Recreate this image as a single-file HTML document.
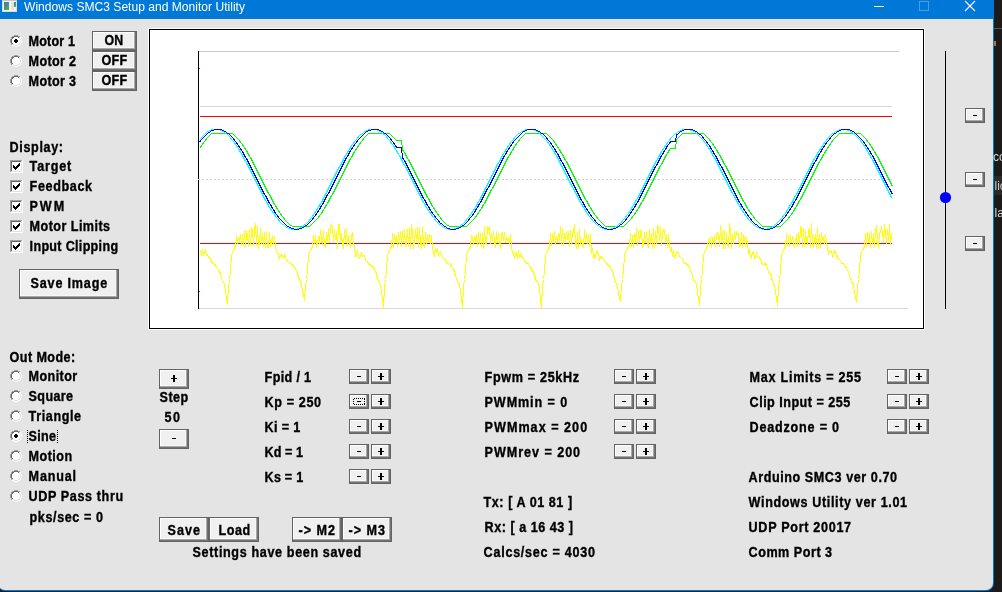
<!DOCTYPE html>
<html><head><meta charset="utf-8"><style>html,body{margin:0;padding:0;background:#1b1b1b;overflow:hidden}svg{display:block;will-change:transform}</style></head>
<body><svg width="1002" height="592" viewBox="0 0 1002 592">
<style>.b{font-family:"Liberation Sans",sans-serif;font-weight:bold;font-size:14px;fill:#000;stroke:#000;stroke-width:0.35px}.t{font-family:"Liberation Sans",sans-serif;font-size:12px;fill:#fff}</style>
<rect x="0" y="0" width="1002" height="592" fill="#1b1b1b"/>
<path d="M-3,0 H994 V583 A8,8 0 0 1 986,591 H5 A8,8 0 0 1 -3,583 Z" fill="#0078d7"/>
<path d="M-2,19 H993 V583 A7,7 0 0 1 986,590 H5 A7,7 0 0 1 -2,583 Z" fill="#e4e4e4"/>
<rect x="0" y="0" width="994" height="19" fill="#0078d7"/>
<defs><linearGradient id="ig" x1="0" y1="0" x2="0.6" y2="1"><stop offset="0" stop-color="#4a70b8"/><stop offset="1" stop-color="#4cb050"/></linearGradient></defs><g shape-rendering="crispEdges"><rect x="2" y="0" width="15" height="12" fill="#e0dcd8"/><rect x="2" y="0" width="15" height="1" fill="#c4c8cc"/><rect x="3" y="1" width="13" height="10" fill="#f8f8f8"/><rect x="4" y="2" width="5" height="8" fill="url(#ig)"/><rect x="11" y="2" width="3" height="8" fill="#e2e2e2"/><rect x="14" y="2" width="2" height="5" fill="url(#ig)"/></g>
<text x="24" y="11" class="t" textLength="221" lengthAdjust="spacingAndGlyphs">Windows SMC3 Setup and Monitor Utility</text>
<rect x="874" y="6" width="10" height="1" fill="#fff"/>
<rect x="919.5" y="1.5" width="9" height="9" fill="none" stroke="#4d9be0" stroke-width="1"/>
<path d="M965,1 L975,11 M975,1 L965,11" stroke="#fff" stroke-width="1.1"/>
<g shape-rendering="crispEdges"><circle cx="16" cy="41" r="4.6" fill="#fff"/><rect x="14" y="35" width="1" height="1" fill="#a0a0a0"/><rect x="15" y="35" width="1" height="1" fill="#a0a0a0"/><rect x="16" y="35" width="1" height="1" fill="#a0a0a0"/><rect x="17" y="35" width="1" height="1" fill="#a0a0a0"/><rect x="12" y="36" width="1" height="1" fill="#a0a0a0"/><rect x="13" y="36" width="1" height="1" fill="#a0a0a0"/><rect x="18" y="36" width="1" height="1" fill="#a0a0a0"/><rect x="19" y="36" width="1" height="1" fill="#a0a0a0"/><rect x="11" y="37" width="1" height="1" fill="#a0a0a0"/><rect x="20" y="37" width="1" height="1" fill="#ffffff"/><rect x="11" y="38" width="1" height="1" fill="#a0a0a0"/><rect x="20" y="38" width="1" height="1" fill="#ffffff"/><rect x="10" y="39" width="1" height="1" fill="#a0a0a0"/><rect x="21" y="39" width="1" height="1" fill="#ffffff"/><rect x="10" y="40" width="1" height="1" fill="#a0a0a0"/><rect x="21" y="40" width="1" height="1" fill="#ffffff"/><rect x="10" y="41" width="1" height="1" fill="#a0a0a0"/><rect x="21" y="41" width="1" height="1" fill="#ffffff"/><rect x="10" y="42" width="1" height="1" fill="#a0a0a0"/><rect x="21" y="42" width="1" height="1" fill="#ffffff"/><rect x="11" y="43" width="1" height="1" fill="#a0a0a0"/><rect x="20" y="43" width="1" height="1" fill="#ffffff"/><rect x="11" y="44" width="1" height="1" fill="#a0a0a0"/><rect x="20" y="44" width="1" height="1" fill="#ffffff"/><rect x="12" y="45" width="1" height="1" fill="#ffffff"/><rect x="13" y="45" width="1" height="1" fill="#ffffff"/><rect x="18" y="45" width="1" height="1" fill="#ffffff"/><rect x="19" y="45" width="1" height="1" fill="#ffffff"/><rect x="14" y="46" width="1" height="1" fill="#ffffff"/><rect x="15" y="46" width="1" height="1" fill="#ffffff"/><rect x="16" y="46" width="1" height="1" fill="#ffffff"/><rect x="17" y="46" width="1" height="1" fill="#ffffff"/><rect x="14" y="36" width="1" height="1" fill="#696969"/><rect x="15" y="36" width="1" height="1" fill="#696969"/><rect x="16" y="36" width="1" height="1" fill="#696969"/><rect x="17" y="36" width="1" height="1" fill="#696969"/><rect x="12" y="37" width="1" height="1" fill="#696969"/><rect x="13" y="37" width="1" height="1" fill="#696969"/><rect x="18" y="37" width="1" height="1" fill="#696969"/><rect x="19" y="37" width="1" height="1" fill="#e3e3e3"/><rect x="12" y="38" width="1" height="1" fill="#696969"/><rect x="19" y="38" width="1" height="1" fill="#e3e3e3"/><rect x="11" y="39" width="1" height="1" fill="#696969"/><rect x="20" y="39" width="1" height="1" fill="#e3e3e3"/><rect x="11" y="40" width="1" height="1" fill="#696969"/><rect x="20" y="40" width="1" height="1" fill="#e3e3e3"/><rect x="11" y="41" width="1" height="1" fill="#696969"/><rect x="20" y="41" width="1" height="1" fill="#e3e3e3"/><rect x="11" y="42" width="1" height="1" fill="#696969"/><rect x="20" y="42" width="1" height="1" fill="#e3e3e3"/><rect x="12" y="43" width="1" height="1" fill="#696969"/><rect x="19" y="43" width="1" height="1" fill="#e3e3e3"/><rect x="12" y="44" width="1" height="1" fill="#e3e3e3"/><rect x="13" y="44" width="1" height="1" fill="#e3e3e3"/><rect x="18" y="44" width="1" height="1" fill="#e3e3e3"/><rect x="19" y="44" width="1" height="1" fill="#e3e3e3"/><rect x="14" y="45" width="1" height="1" fill="#e3e3e3"/><rect x="15" y="45" width="1" height="1" fill="#e3e3e3"/><rect x="16" y="45" width="1" height="1" fill="#e3e3e3"/><rect x="17" y="45" width="1" height="1" fill="#e3e3e3"/><rect x="15" y="39" width="2" height="4" fill="#000"/><rect x="14" y="40" width="4" height="2" fill="#000"/></g>
<g shape-rendering="crispEdges"><circle cx="16" cy="61" r="4.6" fill="#fff"/><rect x="14" y="55" width="1" height="1" fill="#a0a0a0"/><rect x="15" y="55" width="1" height="1" fill="#a0a0a0"/><rect x="16" y="55" width="1" height="1" fill="#a0a0a0"/><rect x="17" y="55" width="1" height="1" fill="#a0a0a0"/><rect x="12" y="56" width="1" height="1" fill="#a0a0a0"/><rect x="13" y="56" width="1" height="1" fill="#a0a0a0"/><rect x="18" y="56" width="1" height="1" fill="#a0a0a0"/><rect x="19" y="56" width="1" height="1" fill="#a0a0a0"/><rect x="11" y="57" width="1" height="1" fill="#a0a0a0"/><rect x="20" y="57" width="1" height="1" fill="#ffffff"/><rect x="11" y="58" width="1" height="1" fill="#a0a0a0"/><rect x="20" y="58" width="1" height="1" fill="#ffffff"/><rect x="10" y="59" width="1" height="1" fill="#a0a0a0"/><rect x="21" y="59" width="1" height="1" fill="#ffffff"/><rect x="10" y="60" width="1" height="1" fill="#a0a0a0"/><rect x="21" y="60" width="1" height="1" fill="#ffffff"/><rect x="10" y="61" width="1" height="1" fill="#a0a0a0"/><rect x="21" y="61" width="1" height="1" fill="#ffffff"/><rect x="10" y="62" width="1" height="1" fill="#a0a0a0"/><rect x="21" y="62" width="1" height="1" fill="#ffffff"/><rect x="11" y="63" width="1" height="1" fill="#a0a0a0"/><rect x="20" y="63" width="1" height="1" fill="#ffffff"/><rect x="11" y="64" width="1" height="1" fill="#a0a0a0"/><rect x="20" y="64" width="1" height="1" fill="#ffffff"/><rect x="12" y="65" width="1" height="1" fill="#ffffff"/><rect x="13" y="65" width="1" height="1" fill="#ffffff"/><rect x="18" y="65" width="1" height="1" fill="#ffffff"/><rect x="19" y="65" width="1" height="1" fill="#ffffff"/><rect x="14" y="66" width="1" height="1" fill="#ffffff"/><rect x="15" y="66" width="1" height="1" fill="#ffffff"/><rect x="16" y="66" width="1" height="1" fill="#ffffff"/><rect x="17" y="66" width="1" height="1" fill="#ffffff"/><rect x="14" y="56" width="1" height="1" fill="#696969"/><rect x="15" y="56" width="1" height="1" fill="#696969"/><rect x="16" y="56" width="1" height="1" fill="#696969"/><rect x="17" y="56" width="1" height="1" fill="#696969"/><rect x="12" y="57" width="1" height="1" fill="#696969"/><rect x="13" y="57" width="1" height="1" fill="#696969"/><rect x="18" y="57" width="1" height="1" fill="#696969"/><rect x="19" y="57" width="1" height="1" fill="#e3e3e3"/><rect x="12" y="58" width="1" height="1" fill="#696969"/><rect x="19" y="58" width="1" height="1" fill="#e3e3e3"/><rect x="11" y="59" width="1" height="1" fill="#696969"/><rect x="20" y="59" width="1" height="1" fill="#e3e3e3"/><rect x="11" y="60" width="1" height="1" fill="#696969"/><rect x="20" y="60" width="1" height="1" fill="#e3e3e3"/><rect x="11" y="61" width="1" height="1" fill="#696969"/><rect x="20" y="61" width="1" height="1" fill="#e3e3e3"/><rect x="11" y="62" width="1" height="1" fill="#696969"/><rect x="20" y="62" width="1" height="1" fill="#e3e3e3"/><rect x="12" y="63" width="1" height="1" fill="#696969"/><rect x="19" y="63" width="1" height="1" fill="#e3e3e3"/><rect x="12" y="64" width="1" height="1" fill="#e3e3e3"/><rect x="13" y="64" width="1" height="1" fill="#e3e3e3"/><rect x="18" y="64" width="1" height="1" fill="#e3e3e3"/><rect x="19" y="64" width="1" height="1" fill="#e3e3e3"/><rect x="14" y="65" width="1" height="1" fill="#e3e3e3"/><rect x="15" y="65" width="1" height="1" fill="#e3e3e3"/><rect x="16" y="65" width="1" height="1" fill="#e3e3e3"/><rect x="17" y="65" width="1" height="1" fill="#e3e3e3"/></g>
<g shape-rendering="crispEdges"><circle cx="16" cy="81" r="4.6" fill="#fff"/><rect x="14" y="75" width="1" height="1" fill="#a0a0a0"/><rect x="15" y="75" width="1" height="1" fill="#a0a0a0"/><rect x="16" y="75" width="1" height="1" fill="#a0a0a0"/><rect x="17" y="75" width="1" height="1" fill="#a0a0a0"/><rect x="12" y="76" width="1" height="1" fill="#a0a0a0"/><rect x="13" y="76" width="1" height="1" fill="#a0a0a0"/><rect x="18" y="76" width="1" height="1" fill="#a0a0a0"/><rect x="19" y="76" width="1" height="1" fill="#a0a0a0"/><rect x="11" y="77" width="1" height="1" fill="#a0a0a0"/><rect x="20" y="77" width="1" height="1" fill="#ffffff"/><rect x="11" y="78" width="1" height="1" fill="#a0a0a0"/><rect x="20" y="78" width="1" height="1" fill="#ffffff"/><rect x="10" y="79" width="1" height="1" fill="#a0a0a0"/><rect x="21" y="79" width="1" height="1" fill="#ffffff"/><rect x="10" y="80" width="1" height="1" fill="#a0a0a0"/><rect x="21" y="80" width="1" height="1" fill="#ffffff"/><rect x="10" y="81" width="1" height="1" fill="#a0a0a0"/><rect x="21" y="81" width="1" height="1" fill="#ffffff"/><rect x="10" y="82" width="1" height="1" fill="#a0a0a0"/><rect x="21" y="82" width="1" height="1" fill="#ffffff"/><rect x="11" y="83" width="1" height="1" fill="#a0a0a0"/><rect x="20" y="83" width="1" height="1" fill="#ffffff"/><rect x="11" y="84" width="1" height="1" fill="#a0a0a0"/><rect x="20" y="84" width="1" height="1" fill="#ffffff"/><rect x="12" y="85" width="1" height="1" fill="#ffffff"/><rect x="13" y="85" width="1" height="1" fill="#ffffff"/><rect x="18" y="85" width="1" height="1" fill="#ffffff"/><rect x="19" y="85" width="1" height="1" fill="#ffffff"/><rect x="14" y="86" width="1" height="1" fill="#ffffff"/><rect x="15" y="86" width="1" height="1" fill="#ffffff"/><rect x="16" y="86" width="1" height="1" fill="#ffffff"/><rect x="17" y="86" width="1" height="1" fill="#ffffff"/><rect x="14" y="76" width="1" height="1" fill="#696969"/><rect x="15" y="76" width="1" height="1" fill="#696969"/><rect x="16" y="76" width="1" height="1" fill="#696969"/><rect x="17" y="76" width="1" height="1" fill="#696969"/><rect x="12" y="77" width="1" height="1" fill="#696969"/><rect x="13" y="77" width="1" height="1" fill="#696969"/><rect x="18" y="77" width="1" height="1" fill="#696969"/><rect x="19" y="77" width="1" height="1" fill="#e3e3e3"/><rect x="12" y="78" width="1" height="1" fill="#696969"/><rect x="19" y="78" width="1" height="1" fill="#e3e3e3"/><rect x="11" y="79" width="1" height="1" fill="#696969"/><rect x="20" y="79" width="1" height="1" fill="#e3e3e3"/><rect x="11" y="80" width="1" height="1" fill="#696969"/><rect x="20" y="80" width="1" height="1" fill="#e3e3e3"/><rect x="11" y="81" width="1" height="1" fill="#696969"/><rect x="20" y="81" width="1" height="1" fill="#e3e3e3"/><rect x="11" y="82" width="1" height="1" fill="#696969"/><rect x="20" y="82" width="1" height="1" fill="#e3e3e3"/><rect x="12" y="83" width="1" height="1" fill="#696969"/><rect x="19" y="83" width="1" height="1" fill="#e3e3e3"/><rect x="12" y="84" width="1" height="1" fill="#e3e3e3"/><rect x="13" y="84" width="1" height="1" fill="#e3e3e3"/><rect x="18" y="84" width="1" height="1" fill="#e3e3e3"/><rect x="19" y="84" width="1" height="1" fill="#e3e3e3"/><rect x="14" y="85" width="1" height="1" fill="#e3e3e3"/><rect x="15" y="85" width="1" height="1" fill="#e3e3e3"/><rect x="16" y="85" width="1" height="1" fill="#e3e3e3"/><rect x="17" y="85" width="1" height="1" fill="#e3e3e3"/></g>
<text transform="scale(0.9,1)" x="31.78" y="46" class="b" textLength="51.62" lengthAdjust="spacing">Motor 1</text>
<text transform="scale(0.9,1)" x="31.78" y="66" class="b" textLength="52.73" lengthAdjust="spacing">Motor 2</text>
<text transform="scale(0.9,1)" x="31.78" y="86" class="b" textLength="52.73" lengthAdjust="spacing">Motor 3</text>
<g shape-rendering="crispEdges"><rect x="92" y="31" width="45" height="20" fill="#646464"/><rect x="93" y="32" width="43" height="18" fill="#727272"/><rect x="93" y="32" width="42" height="17" fill="#a8a8a8"/><rect x="93" y="32" width="41" height="16" fill="#ffffff"/><rect x="94" y="33" width="40" height="15" fill="#f7f7f7"/><rect x="94" y="33" width="39" height="14" fill="#f0f0f0"/></g>
<text transform="scale(0.9,1)" x="116.22" y="45" class="b" textLength="20.56" lengthAdjust="spacingAndGlyphs">ON</text>
<g shape-rendering="crispEdges"><rect x="92" y="51" width="45" height="20" fill="#646464"/><rect x="93" y="52" width="43" height="18" fill="#727272"/><rect x="93" y="52" width="42" height="17" fill="#a8a8a8"/><rect x="93" y="52" width="41" height="16" fill="#ffffff"/><rect x="94" y="53" width="40" height="15" fill="#f7f7f7"/><rect x="94" y="53" width="39" height="14" fill="#f0f0f0"/></g>
<text transform="scale(0.9,1)" x="112.89" y="65" class="b" textLength="28.33" lengthAdjust="spacing">OFF</text>
<g shape-rendering="crispEdges"><rect x="92" y="71" width="45" height="20" fill="#646464"/><rect x="93" y="72" width="43" height="18" fill="#727272"/><rect x="93" y="72" width="42" height="17" fill="#a8a8a8"/><rect x="93" y="72" width="41" height="16" fill="#ffffff"/><rect x="94" y="73" width="40" height="15" fill="#f7f7f7"/><rect x="94" y="73" width="39" height="14" fill="#f0f0f0"/></g>
<text transform="scale(0.9,1)" x="112.89" y="85" class="b" textLength="28.33" lengthAdjust="spacing">OFF</text>
<text transform="scale(0.9,1)" x="10.67" y="152" class="b" textLength="59.41" lengthAdjust="spacing">Display:</text>
<g shape-rendering="crispEdges"><rect x="10" y="160" width="13" height="13" fill="#fff"/><rect x="10" y="160" width="12" height="1" fill="#a0a0a0"/><rect x="10" y="160" width="1" height="12" fill="#a0a0a0"/><rect x="11" y="161" width="10" height="1" fill="#696969"/><rect x="11" y="161" width="1" height="10" fill="#696969"/><rect x="11" y="171" width="11" height="1" fill="#e3e3e3"/><rect x="21" y="161" width="1" height="11" fill="#e3e3e3"/><rect x="19" y="163" width="1" height="1" fill="#000"/><rect x="18" y="164" width="1" height="1" fill="#000"/><rect x="19" y="164" width="1" height="1" fill="#000"/><rect x="13" y="165" width="1" height="1" fill="#000"/><rect x="17" y="165" width="1" height="1" fill="#000"/><rect x="18" y="165" width="1" height="1" fill="#000"/><rect x="19" y="165" width="1" height="1" fill="#000"/><rect x="13" y="166" width="1" height="1" fill="#000"/><rect x="14" y="166" width="1" height="1" fill="#000"/><rect x="16" y="166" width="1" height="1" fill="#000"/><rect x="17" y="166" width="1" height="1" fill="#000"/><rect x="18" y="166" width="1" height="1" fill="#000"/><rect x="13" y="167" width="1" height="1" fill="#000"/><rect x="14" y="167" width="1" height="1" fill="#000"/><rect x="15" y="167" width="1" height="1" fill="#000"/><rect x="16" y="167" width="1" height="1" fill="#000"/><rect x="17" y="167" width="1" height="1" fill="#000"/><rect x="14" y="168" width="1" height="1" fill="#000"/><rect x="15" y="168" width="1" height="1" fill="#000"/><rect x="16" y="168" width="1" height="1" fill="#000"/><rect x="15" y="169" width="1" height="1" fill="#000"/></g>
<text transform="scale(0.9,1)" x="32.89" y="171" class="b" textLength="46.16" lengthAdjust="spacing">Target</text>
<g shape-rendering="crispEdges"><rect x="10" y="180" width="13" height="13" fill="#fff"/><rect x="10" y="180" width="12" height="1" fill="#a0a0a0"/><rect x="10" y="180" width="1" height="12" fill="#a0a0a0"/><rect x="11" y="181" width="10" height="1" fill="#696969"/><rect x="11" y="181" width="1" height="10" fill="#696969"/><rect x="11" y="191" width="11" height="1" fill="#e3e3e3"/><rect x="21" y="181" width="1" height="11" fill="#e3e3e3"/><rect x="19" y="183" width="1" height="1" fill="#000"/><rect x="18" y="184" width="1" height="1" fill="#000"/><rect x="19" y="184" width="1" height="1" fill="#000"/><rect x="13" y="185" width="1" height="1" fill="#000"/><rect x="17" y="185" width="1" height="1" fill="#000"/><rect x="18" y="185" width="1" height="1" fill="#000"/><rect x="19" y="185" width="1" height="1" fill="#000"/><rect x="13" y="186" width="1" height="1" fill="#000"/><rect x="14" y="186" width="1" height="1" fill="#000"/><rect x="16" y="186" width="1" height="1" fill="#000"/><rect x="17" y="186" width="1" height="1" fill="#000"/><rect x="18" y="186" width="1" height="1" fill="#000"/><rect x="13" y="187" width="1" height="1" fill="#000"/><rect x="14" y="187" width="1" height="1" fill="#000"/><rect x="15" y="187" width="1" height="1" fill="#000"/><rect x="16" y="187" width="1" height="1" fill="#000"/><rect x="17" y="187" width="1" height="1" fill="#000"/><rect x="14" y="188" width="1" height="1" fill="#000"/><rect x="15" y="188" width="1" height="1" fill="#000"/><rect x="16" y="188" width="1" height="1" fill="#000"/><rect x="15" y="189" width="1" height="1" fill="#000"/></g>
<text transform="scale(0.9,1)" x="32.89" y="191" class="b" textLength="69.43" lengthAdjust="spacing">Feedback</text>
<g shape-rendering="crispEdges"><rect x="10" y="200" width="13" height="13" fill="#fff"/><rect x="10" y="200" width="12" height="1" fill="#a0a0a0"/><rect x="10" y="200" width="1" height="12" fill="#a0a0a0"/><rect x="11" y="201" width="10" height="1" fill="#696969"/><rect x="11" y="201" width="1" height="10" fill="#696969"/><rect x="11" y="211" width="11" height="1" fill="#e3e3e3"/><rect x="21" y="201" width="1" height="11" fill="#e3e3e3"/><rect x="19" y="203" width="1" height="1" fill="#000"/><rect x="18" y="204" width="1" height="1" fill="#000"/><rect x="19" y="204" width="1" height="1" fill="#000"/><rect x="13" y="205" width="1" height="1" fill="#000"/><rect x="17" y="205" width="1" height="1" fill="#000"/><rect x="18" y="205" width="1" height="1" fill="#000"/><rect x="19" y="205" width="1" height="1" fill="#000"/><rect x="13" y="206" width="1" height="1" fill="#000"/><rect x="14" y="206" width="1" height="1" fill="#000"/><rect x="16" y="206" width="1" height="1" fill="#000"/><rect x="17" y="206" width="1" height="1" fill="#000"/><rect x="18" y="206" width="1" height="1" fill="#000"/><rect x="13" y="207" width="1" height="1" fill="#000"/><rect x="14" y="207" width="1" height="1" fill="#000"/><rect x="15" y="207" width="1" height="1" fill="#000"/><rect x="16" y="207" width="1" height="1" fill="#000"/><rect x="17" y="207" width="1" height="1" fill="#000"/><rect x="14" y="208" width="1" height="1" fill="#000"/><rect x="15" y="208" width="1" height="1" fill="#000"/><rect x="16" y="208" width="1" height="1" fill="#000"/><rect x="15" y="209" width="1" height="1" fill="#000"/></g>
<text transform="scale(0.9,1)" x="32.89" y="211" class="b" textLength="38.35" lengthAdjust="spacing">PWM</text>
<g shape-rendering="crispEdges"><rect x="10" y="220" width="13" height="13" fill="#fff"/><rect x="10" y="220" width="12" height="1" fill="#a0a0a0"/><rect x="10" y="220" width="1" height="12" fill="#a0a0a0"/><rect x="11" y="221" width="10" height="1" fill="#696969"/><rect x="11" y="221" width="1" height="10" fill="#696969"/><rect x="11" y="231" width="11" height="1" fill="#e3e3e3"/><rect x="21" y="221" width="1" height="11" fill="#e3e3e3"/><rect x="19" y="223" width="1" height="1" fill="#000"/><rect x="18" y="224" width="1" height="1" fill="#000"/><rect x="19" y="224" width="1" height="1" fill="#000"/><rect x="13" y="225" width="1" height="1" fill="#000"/><rect x="17" y="225" width="1" height="1" fill="#000"/><rect x="18" y="225" width="1" height="1" fill="#000"/><rect x="19" y="225" width="1" height="1" fill="#000"/><rect x="13" y="226" width="1" height="1" fill="#000"/><rect x="14" y="226" width="1" height="1" fill="#000"/><rect x="16" y="226" width="1" height="1" fill="#000"/><rect x="17" y="226" width="1" height="1" fill="#000"/><rect x="18" y="226" width="1" height="1" fill="#000"/><rect x="13" y="227" width="1" height="1" fill="#000"/><rect x="14" y="227" width="1" height="1" fill="#000"/><rect x="15" y="227" width="1" height="1" fill="#000"/><rect x="16" y="227" width="1" height="1" fill="#000"/><rect x="17" y="227" width="1" height="1" fill="#000"/><rect x="14" y="228" width="1" height="1" fill="#000"/><rect x="15" y="228" width="1" height="1" fill="#000"/><rect x="16" y="228" width="1" height="1" fill="#000"/><rect x="15" y="229" width="1" height="1" fill="#000"/></g>
<text transform="scale(0.9,1)" x="32.89" y="231" class="b" textLength="89.44" lengthAdjust="spacing">Motor Limits</text>
<g shape-rendering="crispEdges"><rect x="10" y="240" width="13" height="13" fill="#fff"/><rect x="10" y="240" width="12" height="1" fill="#a0a0a0"/><rect x="10" y="240" width="1" height="12" fill="#a0a0a0"/><rect x="11" y="241" width="10" height="1" fill="#696969"/><rect x="11" y="241" width="1" height="10" fill="#696969"/><rect x="11" y="251" width="11" height="1" fill="#e3e3e3"/><rect x="21" y="241" width="1" height="11" fill="#e3e3e3"/><rect x="19" y="243" width="1" height="1" fill="#000"/><rect x="18" y="244" width="1" height="1" fill="#000"/><rect x="19" y="244" width="1" height="1" fill="#000"/><rect x="13" y="245" width="1" height="1" fill="#000"/><rect x="17" y="245" width="1" height="1" fill="#000"/><rect x="18" y="245" width="1" height="1" fill="#000"/><rect x="19" y="245" width="1" height="1" fill="#000"/><rect x="13" y="246" width="1" height="1" fill="#000"/><rect x="14" y="246" width="1" height="1" fill="#000"/><rect x="16" y="246" width="1" height="1" fill="#000"/><rect x="17" y="246" width="1" height="1" fill="#000"/><rect x="18" y="246" width="1" height="1" fill="#000"/><rect x="13" y="247" width="1" height="1" fill="#000"/><rect x="14" y="247" width="1" height="1" fill="#000"/><rect x="15" y="247" width="1" height="1" fill="#000"/><rect x="16" y="247" width="1" height="1" fill="#000"/><rect x="17" y="247" width="1" height="1" fill="#000"/><rect x="14" y="248" width="1" height="1" fill="#000"/><rect x="15" y="248" width="1" height="1" fill="#000"/><rect x="16" y="248" width="1" height="1" fill="#000"/><rect x="15" y="249" width="1" height="1" fill="#000"/></g>
<text transform="scale(0.9,1)" x="32.89" y="251" class="b" textLength="98.31" lengthAdjust="spacing">Input Clipping</text>
<g shape-rendering="crispEdges"><rect x="19" y="269" width="100" height="30" fill="#646464"/><rect x="20" y="270" width="98" height="28" fill="#727272"/><rect x="20" y="270" width="97" height="27" fill="#a8a8a8"/><rect x="20" y="270" width="96" height="26" fill="#ffffff"/><rect x="21" y="271" width="95" height="25" fill="#f7f7f7"/><rect x="21" y="271" width="94" height="24" fill="#f0f0f0"/></g>
<text transform="scale(0.9,1)" x="34.00" y="288" class="b" textLength="85.05" lengthAdjust="spacing">Save Image</text>
<text transform="scale(0.9,1)" x="10.67" y="362" class="b" textLength="72.78" lengthAdjust="spacing">Out Mode:</text>
<g shape-rendering="crispEdges"><circle cx="16" cy="376" r="4.6" fill="#fff"/><rect x="14" y="370" width="1" height="1" fill="#a0a0a0"/><rect x="15" y="370" width="1" height="1" fill="#a0a0a0"/><rect x="16" y="370" width="1" height="1" fill="#a0a0a0"/><rect x="17" y="370" width="1" height="1" fill="#a0a0a0"/><rect x="12" y="371" width="1" height="1" fill="#a0a0a0"/><rect x="13" y="371" width="1" height="1" fill="#a0a0a0"/><rect x="18" y="371" width="1" height="1" fill="#a0a0a0"/><rect x="19" y="371" width="1" height="1" fill="#a0a0a0"/><rect x="11" y="372" width="1" height="1" fill="#a0a0a0"/><rect x="20" y="372" width="1" height="1" fill="#ffffff"/><rect x="11" y="373" width="1" height="1" fill="#a0a0a0"/><rect x="20" y="373" width="1" height="1" fill="#ffffff"/><rect x="10" y="374" width="1" height="1" fill="#a0a0a0"/><rect x="21" y="374" width="1" height="1" fill="#ffffff"/><rect x="10" y="375" width="1" height="1" fill="#a0a0a0"/><rect x="21" y="375" width="1" height="1" fill="#ffffff"/><rect x="10" y="376" width="1" height="1" fill="#a0a0a0"/><rect x="21" y="376" width="1" height="1" fill="#ffffff"/><rect x="10" y="377" width="1" height="1" fill="#a0a0a0"/><rect x="21" y="377" width="1" height="1" fill="#ffffff"/><rect x="11" y="378" width="1" height="1" fill="#a0a0a0"/><rect x="20" y="378" width="1" height="1" fill="#ffffff"/><rect x="11" y="379" width="1" height="1" fill="#a0a0a0"/><rect x="20" y="379" width="1" height="1" fill="#ffffff"/><rect x="12" y="380" width="1" height="1" fill="#ffffff"/><rect x="13" y="380" width="1" height="1" fill="#ffffff"/><rect x="18" y="380" width="1" height="1" fill="#ffffff"/><rect x="19" y="380" width="1" height="1" fill="#ffffff"/><rect x="14" y="381" width="1" height="1" fill="#ffffff"/><rect x="15" y="381" width="1" height="1" fill="#ffffff"/><rect x="16" y="381" width="1" height="1" fill="#ffffff"/><rect x="17" y="381" width="1" height="1" fill="#ffffff"/><rect x="14" y="371" width="1" height="1" fill="#696969"/><rect x="15" y="371" width="1" height="1" fill="#696969"/><rect x="16" y="371" width="1" height="1" fill="#696969"/><rect x="17" y="371" width="1" height="1" fill="#696969"/><rect x="12" y="372" width="1" height="1" fill="#696969"/><rect x="13" y="372" width="1" height="1" fill="#696969"/><rect x="18" y="372" width="1" height="1" fill="#696969"/><rect x="19" y="372" width="1" height="1" fill="#e3e3e3"/><rect x="12" y="373" width="1" height="1" fill="#696969"/><rect x="19" y="373" width="1" height="1" fill="#e3e3e3"/><rect x="11" y="374" width="1" height="1" fill="#696969"/><rect x="20" y="374" width="1" height="1" fill="#e3e3e3"/><rect x="11" y="375" width="1" height="1" fill="#696969"/><rect x="20" y="375" width="1" height="1" fill="#e3e3e3"/><rect x="11" y="376" width="1" height="1" fill="#696969"/><rect x="20" y="376" width="1" height="1" fill="#e3e3e3"/><rect x="11" y="377" width="1" height="1" fill="#696969"/><rect x="20" y="377" width="1" height="1" fill="#e3e3e3"/><rect x="12" y="378" width="1" height="1" fill="#696969"/><rect x="19" y="378" width="1" height="1" fill="#e3e3e3"/><rect x="12" y="379" width="1" height="1" fill="#e3e3e3"/><rect x="13" y="379" width="1" height="1" fill="#e3e3e3"/><rect x="18" y="379" width="1" height="1" fill="#e3e3e3"/><rect x="19" y="379" width="1" height="1" fill="#e3e3e3"/><rect x="14" y="380" width="1" height="1" fill="#e3e3e3"/><rect x="15" y="380" width="1" height="1" fill="#e3e3e3"/><rect x="16" y="380" width="1" height="1" fill="#e3e3e3"/><rect x="17" y="380" width="1" height="1" fill="#e3e3e3"/></g>
<text transform="scale(0.9,1)" x="31.78" y="381" class="b" textLength="53.91" lengthAdjust="spacing">Monitor</text>
<g shape-rendering="crispEdges"><circle cx="16" cy="396" r="4.6" fill="#fff"/><rect x="14" y="390" width="1" height="1" fill="#a0a0a0"/><rect x="15" y="390" width="1" height="1" fill="#a0a0a0"/><rect x="16" y="390" width="1" height="1" fill="#a0a0a0"/><rect x="17" y="390" width="1" height="1" fill="#a0a0a0"/><rect x="12" y="391" width="1" height="1" fill="#a0a0a0"/><rect x="13" y="391" width="1" height="1" fill="#a0a0a0"/><rect x="18" y="391" width="1" height="1" fill="#a0a0a0"/><rect x="19" y="391" width="1" height="1" fill="#a0a0a0"/><rect x="11" y="392" width="1" height="1" fill="#a0a0a0"/><rect x="20" y="392" width="1" height="1" fill="#ffffff"/><rect x="11" y="393" width="1" height="1" fill="#a0a0a0"/><rect x="20" y="393" width="1" height="1" fill="#ffffff"/><rect x="10" y="394" width="1" height="1" fill="#a0a0a0"/><rect x="21" y="394" width="1" height="1" fill="#ffffff"/><rect x="10" y="395" width="1" height="1" fill="#a0a0a0"/><rect x="21" y="395" width="1" height="1" fill="#ffffff"/><rect x="10" y="396" width="1" height="1" fill="#a0a0a0"/><rect x="21" y="396" width="1" height="1" fill="#ffffff"/><rect x="10" y="397" width="1" height="1" fill="#a0a0a0"/><rect x="21" y="397" width="1" height="1" fill="#ffffff"/><rect x="11" y="398" width="1" height="1" fill="#a0a0a0"/><rect x="20" y="398" width="1" height="1" fill="#ffffff"/><rect x="11" y="399" width="1" height="1" fill="#a0a0a0"/><rect x="20" y="399" width="1" height="1" fill="#ffffff"/><rect x="12" y="400" width="1" height="1" fill="#ffffff"/><rect x="13" y="400" width="1" height="1" fill="#ffffff"/><rect x="18" y="400" width="1" height="1" fill="#ffffff"/><rect x="19" y="400" width="1" height="1" fill="#ffffff"/><rect x="14" y="401" width="1" height="1" fill="#ffffff"/><rect x="15" y="401" width="1" height="1" fill="#ffffff"/><rect x="16" y="401" width="1" height="1" fill="#ffffff"/><rect x="17" y="401" width="1" height="1" fill="#ffffff"/><rect x="14" y="391" width="1" height="1" fill="#696969"/><rect x="15" y="391" width="1" height="1" fill="#696969"/><rect x="16" y="391" width="1" height="1" fill="#696969"/><rect x="17" y="391" width="1" height="1" fill="#696969"/><rect x="12" y="392" width="1" height="1" fill="#696969"/><rect x="13" y="392" width="1" height="1" fill="#696969"/><rect x="18" y="392" width="1" height="1" fill="#696969"/><rect x="19" y="392" width="1" height="1" fill="#e3e3e3"/><rect x="12" y="393" width="1" height="1" fill="#696969"/><rect x="19" y="393" width="1" height="1" fill="#e3e3e3"/><rect x="11" y="394" width="1" height="1" fill="#696969"/><rect x="20" y="394" width="1" height="1" fill="#e3e3e3"/><rect x="11" y="395" width="1" height="1" fill="#696969"/><rect x="20" y="395" width="1" height="1" fill="#e3e3e3"/><rect x="11" y="396" width="1" height="1" fill="#696969"/><rect x="20" y="396" width="1" height="1" fill="#e3e3e3"/><rect x="11" y="397" width="1" height="1" fill="#696969"/><rect x="20" y="397" width="1" height="1" fill="#e3e3e3"/><rect x="12" y="398" width="1" height="1" fill="#696969"/><rect x="19" y="398" width="1" height="1" fill="#e3e3e3"/><rect x="12" y="399" width="1" height="1" fill="#e3e3e3"/><rect x="13" y="399" width="1" height="1" fill="#e3e3e3"/><rect x="18" y="399" width="1" height="1" fill="#e3e3e3"/><rect x="19" y="399" width="1" height="1" fill="#e3e3e3"/><rect x="14" y="400" width="1" height="1" fill="#e3e3e3"/><rect x="15" y="400" width="1" height="1" fill="#e3e3e3"/><rect x="16" y="400" width="1" height="1" fill="#e3e3e3"/><rect x="17" y="400" width="1" height="1" fill="#e3e3e3"/></g>
<text transform="scale(0.9,1)" x="31.78" y="401" class="b" textLength="49.41" lengthAdjust="spacing">Square</text>
<g shape-rendering="crispEdges"><circle cx="16" cy="416" r="4.6" fill="#fff"/><rect x="14" y="410" width="1" height="1" fill="#a0a0a0"/><rect x="15" y="410" width="1" height="1" fill="#a0a0a0"/><rect x="16" y="410" width="1" height="1" fill="#a0a0a0"/><rect x="17" y="410" width="1" height="1" fill="#a0a0a0"/><rect x="12" y="411" width="1" height="1" fill="#a0a0a0"/><rect x="13" y="411" width="1" height="1" fill="#a0a0a0"/><rect x="18" y="411" width="1" height="1" fill="#a0a0a0"/><rect x="19" y="411" width="1" height="1" fill="#a0a0a0"/><rect x="11" y="412" width="1" height="1" fill="#a0a0a0"/><rect x="20" y="412" width="1" height="1" fill="#ffffff"/><rect x="11" y="413" width="1" height="1" fill="#a0a0a0"/><rect x="20" y="413" width="1" height="1" fill="#ffffff"/><rect x="10" y="414" width="1" height="1" fill="#a0a0a0"/><rect x="21" y="414" width="1" height="1" fill="#ffffff"/><rect x="10" y="415" width="1" height="1" fill="#a0a0a0"/><rect x="21" y="415" width="1" height="1" fill="#ffffff"/><rect x="10" y="416" width="1" height="1" fill="#a0a0a0"/><rect x="21" y="416" width="1" height="1" fill="#ffffff"/><rect x="10" y="417" width="1" height="1" fill="#a0a0a0"/><rect x="21" y="417" width="1" height="1" fill="#ffffff"/><rect x="11" y="418" width="1" height="1" fill="#a0a0a0"/><rect x="20" y="418" width="1" height="1" fill="#ffffff"/><rect x="11" y="419" width="1" height="1" fill="#a0a0a0"/><rect x="20" y="419" width="1" height="1" fill="#ffffff"/><rect x="12" y="420" width="1" height="1" fill="#ffffff"/><rect x="13" y="420" width="1" height="1" fill="#ffffff"/><rect x="18" y="420" width="1" height="1" fill="#ffffff"/><rect x="19" y="420" width="1" height="1" fill="#ffffff"/><rect x="14" y="421" width="1" height="1" fill="#ffffff"/><rect x="15" y="421" width="1" height="1" fill="#ffffff"/><rect x="16" y="421" width="1" height="1" fill="#ffffff"/><rect x="17" y="421" width="1" height="1" fill="#ffffff"/><rect x="14" y="411" width="1" height="1" fill="#696969"/><rect x="15" y="411" width="1" height="1" fill="#696969"/><rect x="16" y="411" width="1" height="1" fill="#696969"/><rect x="17" y="411" width="1" height="1" fill="#696969"/><rect x="12" y="412" width="1" height="1" fill="#696969"/><rect x="13" y="412" width="1" height="1" fill="#696969"/><rect x="18" y="412" width="1" height="1" fill="#696969"/><rect x="19" y="412" width="1" height="1" fill="#e3e3e3"/><rect x="12" y="413" width="1" height="1" fill="#696969"/><rect x="19" y="413" width="1" height="1" fill="#e3e3e3"/><rect x="11" y="414" width="1" height="1" fill="#696969"/><rect x="20" y="414" width="1" height="1" fill="#e3e3e3"/><rect x="11" y="415" width="1" height="1" fill="#696969"/><rect x="20" y="415" width="1" height="1" fill="#e3e3e3"/><rect x="11" y="416" width="1" height="1" fill="#696969"/><rect x="20" y="416" width="1" height="1" fill="#e3e3e3"/><rect x="11" y="417" width="1" height="1" fill="#696969"/><rect x="20" y="417" width="1" height="1" fill="#e3e3e3"/><rect x="12" y="418" width="1" height="1" fill="#696969"/><rect x="19" y="418" width="1" height="1" fill="#e3e3e3"/><rect x="12" y="419" width="1" height="1" fill="#e3e3e3"/><rect x="13" y="419" width="1" height="1" fill="#e3e3e3"/><rect x="18" y="419" width="1" height="1" fill="#e3e3e3"/><rect x="19" y="419" width="1" height="1" fill="#e3e3e3"/><rect x="14" y="420" width="1" height="1" fill="#e3e3e3"/><rect x="15" y="420" width="1" height="1" fill="#e3e3e3"/><rect x="16" y="420" width="1" height="1" fill="#e3e3e3"/><rect x="17" y="420" width="1" height="1" fill="#e3e3e3"/></g>
<text transform="scale(0.9,1)" x="31.78" y="421" class="b" textLength="58.31" lengthAdjust="spacing">Triangle</text>
<g shape-rendering="crispEdges"><circle cx="16" cy="436" r="4.6" fill="#fff"/><rect x="14" y="430" width="1" height="1" fill="#a0a0a0"/><rect x="15" y="430" width="1" height="1" fill="#a0a0a0"/><rect x="16" y="430" width="1" height="1" fill="#a0a0a0"/><rect x="17" y="430" width="1" height="1" fill="#a0a0a0"/><rect x="12" y="431" width="1" height="1" fill="#a0a0a0"/><rect x="13" y="431" width="1" height="1" fill="#a0a0a0"/><rect x="18" y="431" width="1" height="1" fill="#a0a0a0"/><rect x="19" y="431" width="1" height="1" fill="#a0a0a0"/><rect x="11" y="432" width="1" height="1" fill="#a0a0a0"/><rect x="20" y="432" width="1" height="1" fill="#ffffff"/><rect x="11" y="433" width="1" height="1" fill="#a0a0a0"/><rect x="20" y="433" width="1" height="1" fill="#ffffff"/><rect x="10" y="434" width="1" height="1" fill="#a0a0a0"/><rect x="21" y="434" width="1" height="1" fill="#ffffff"/><rect x="10" y="435" width="1" height="1" fill="#a0a0a0"/><rect x="21" y="435" width="1" height="1" fill="#ffffff"/><rect x="10" y="436" width="1" height="1" fill="#a0a0a0"/><rect x="21" y="436" width="1" height="1" fill="#ffffff"/><rect x="10" y="437" width="1" height="1" fill="#a0a0a0"/><rect x="21" y="437" width="1" height="1" fill="#ffffff"/><rect x="11" y="438" width="1" height="1" fill="#a0a0a0"/><rect x="20" y="438" width="1" height="1" fill="#ffffff"/><rect x="11" y="439" width="1" height="1" fill="#a0a0a0"/><rect x="20" y="439" width="1" height="1" fill="#ffffff"/><rect x="12" y="440" width="1" height="1" fill="#ffffff"/><rect x="13" y="440" width="1" height="1" fill="#ffffff"/><rect x="18" y="440" width="1" height="1" fill="#ffffff"/><rect x="19" y="440" width="1" height="1" fill="#ffffff"/><rect x="14" y="441" width="1" height="1" fill="#ffffff"/><rect x="15" y="441" width="1" height="1" fill="#ffffff"/><rect x="16" y="441" width="1" height="1" fill="#ffffff"/><rect x="17" y="441" width="1" height="1" fill="#ffffff"/><rect x="14" y="431" width="1" height="1" fill="#696969"/><rect x="15" y="431" width="1" height="1" fill="#696969"/><rect x="16" y="431" width="1" height="1" fill="#696969"/><rect x="17" y="431" width="1" height="1" fill="#696969"/><rect x="12" y="432" width="1" height="1" fill="#696969"/><rect x="13" y="432" width="1" height="1" fill="#696969"/><rect x="18" y="432" width="1" height="1" fill="#696969"/><rect x="19" y="432" width="1" height="1" fill="#e3e3e3"/><rect x="12" y="433" width="1" height="1" fill="#696969"/><rect x="19" y="433" width="1" height="1" fill="#e3e3e3"/><rect x="11" y="434" width="1" height="1" fill="#696969"/><rect x="20" y="434" width="1" height="1" fill="#e3e3e3"/><rect x="11" y="435" width="1" height="1" fill="#696969"/><rect x="20" y="435" width="1" height="1" fill="#e3e3e3"/><rect x="11" y="436" width="1" height="1" fill="#696969"/><rect x="20" y="436" width="1" height="1" fill="#e3e3e3"/><rect x="11" y="437" width="1" height="1" fill="#696969"/><rect x="20" y="437" width="1" height="1" fill="#e3e3e3"/><rect x="12" y="438" width="1" height="1" fill="#696969"/><rect x="19" y="438" width="1" height="1" fill="#e3e3e3"/><rect x="12" y="439" width="1" height="1" fill="#e3e3e3"/><rect x="13" y="439" width="1" height="1" fill="#e3e3e3"/><rect x="18" y="439" width="1" height="1" fill="#e3e3e3"/><rect x="19" y="439" width="1" height="1" fill="#e3e3e3"/><rect x="14" y="440" width="1" height="1" fill="#e3e3e3"/><rect x="15" y="440" width="1" height="1" fill="#e3e3e3"/><rect x="16" y="440" width="1" height="1" fill="#e3e3e3"/><rect x="17" y="440" width="1" height="1" fill="#e3e3e3"/><rect x="15" y="434" width="2" height="4" fill="#000"/><rect x="14" y="435" width="4" height="2" fill="#000"/></g>
<text transform="scale(0.9,1)" x="31.78" y="441" class="b" textLength="30.52" lengthAdjust="spacing">Sine</text>
<g shape-rendering="crispEdges"><circle cx="16" cy="456" r="4.6" fill="#fff"/><rect x="14" y="450" width="1" height="1" fill="#a0a0a0"/><rect x="15" y="450" width="1" height="1" fill="#a0a0a0"/><rect x="16" y="450" width="1" height="1" fill="#a0a0a0"/><rect x="17" y="450" width="1" height="1" fill="#a0a0a0"/><rect x="12" y="451" width="1" height="1" fill="#a0a0a0"/><rect x="13" y="451" width="1" height="1" fill="#a0a0a0"/><rect x="18" y="451" width="1" height="1" fill="#a0a0a0"/><rect x="19" y="451" width="1" height="1" fill="#a0a0a0"/><rect x="11" y="452" width="1" height="1" fill="#a0a0a0"/><rect x="20" y="452" width="1" height="1" fill="#ffffff"/><rect x="11" y="453" width="1" height="1" fill="#a0a0a0"/><rect x="20" y="453" width="1" height="1" fill="#ffffff"/><rect x="10" y="454" width="1" height="1" fill="#a0a0a0"/><rect x="21" y="454" width="1" height="1" fill="#ffffff"/><rect x="10" y="455" width="1" height="1" fill="#a0a0a0"/><rect x="21" y="455" width="1" height="1" fill="#ffffff"/><rect x="10" y="456" width="1" height="1" fill="#a0a0a0"/><rect x="21" y="456" width="1" height="1" fill="#ffffff"/><rect x="10" y="457" width="1" height="1" fill="#a0a0a0"/><rect x="21" y="457" width="1" height="1" fill="#ffffff"/><rect x="11" y="458" width="1" height="1" fill="#a0a0a0"/><rect x="20" y="458" width="1" height="1" fill="#ffffff"/><rect x="11" y="459" width="1" height="1" fill="#a0a0a0"/><rect x="20" y="459" width="1" height="1" fill="#ffffff"/><rect x="12" y="460" width="1" height="1" fill="#ffffff"/><rect x="13" y="460" width="1" height="1" fill="#ffffff"/><rect x="18" y="460" width="1" height="1" fill="#ffffff"/><rect x="19" y="460" width="1" height="1" fill="#ffffff"/><rect x="14" y="461" width="1" height="1" fill="#ffffff"/><rect x="15" y="461" width="1" height="1" fill="#ffffff"/><rect x="16" y="461" width="1" height="1" fill="#ffffff"/><rect x="17" y="461" width="1" height="1" fill="#ffffff"/><rect x="14" y="451" width="1" height="1" fill="#696969"/><rect x="15" y="451" width="1" height="1" fill="#696969"/><rect x="16" y="451" width="1" height="1" fill="#696969"/><rect x="17" y="451" width="1" height="1" fill="#696969"/><rect x="12" y="452" width="1" height="1" fill="#696969"/><rect x="13" y="452" width="1" height="1" fill="#696969"/><rect x="18" y="452" width="1" height="1" fill="#696969"/><rect x="19" y="452" width="1" height="1" fill="#e3e3e3"/><rect x="12" y="453" width="1" height="1" fill="#696969"/><rect x="19" y="453" width="1" height="1" fill="#e3e3e3"/><rect x="11" y="454" width="1" height="1" fill="#696969"/><rect x="20" y="454" width="1" height="1" fill="#e3e3e3"/><rect x="11" y="455" width="1" height="1" fill="#696969"/><rect x="20" y="455" width="1" height="1" fill="#e3e3e3"/><rect x="11" y="456" width="1" height="1" fill="#696969"/><rect x="20" y="456" width="1" height="1" fill="#e3e3e3"/><rect x="11" y="457" width="1" height="1" fill="#696969"/><rect x="20" y="457" width="1" height="1" fill="#e3e3e3"/><rect x="12" y="458" width="1" height="1" fill="#696969"/><rect x="19" y="458" width="1" height="1" fill="#e3e3e3"/><rect x="12" y="459" width="1" height="1" fill="#e3e3e3"/><rect x="13" y="459" width="1" height="1" fill="#e3e3e3"/><rect x="18" y="459" width="1" height="1" fill="#e3e3e3"/><rect x="19" y="459" width="1" height="1" fill="#e3e3e3"/><rect x="14" y="460" width="1" height="1" fill="#e3e3e3"/><rect x="15" y="460" width="1" height="1" fill="#e3e3e3"/><rect x="16" y="460" width="1" height="1" fill="#e3e3e3"/><rect x="17" y="460" width="1" height="1" fill="#e3e3e3"/></g>
<text transform="scale(0.9,1)" x="31.78" y="461" class="b" textLength="48.30" lengthAdjust="spacing">Motion</text>
<g shape-rendering="crispEdges"><circle cx="16" cy="476" r="4.6" fill="#fff"/><rect x="14" y="470" width="1" height="1" fill="#a0a0a0"/><rect x="15" y="470" width="1" height="1" fill="#a0a0a0"/><rect x="16" y="470" width="1" height="1" fill="#a0a0a0"/><rect x="17" y="470" width="1" height="1" fill="#a0a0a0"/><rect x="12" y="471" width="1" height="1" fill="#a0a0a0"/><rect x="13" y="471" width="1" height="1" fill="#a0a0a0"/><rect x="18" y="471" width="1" height="1" fill="#a0a0a0"/><rect x="19" y="471" width="1" height="1" fill="#a0a0a0"/><rect x="11" y="472" width="1" height="1" fill="#a0a0a0"/><rect x="20" y="472" width="1" height="1" fill="#ffffff"/><rect x="11" y="473" width="1" height="1" fill="#a0a0a0"/><rect x="20" y="473" width="1" height="1" fill="#ffffff"/><rect x="10" y="474" width="1" height="1" fill="#a0a0a0"/><rect x="21" y="474" width="1" height="1" fill="#ffffff"/><rect x="10" y="475" width="1" height="1" fill="#a0a0a0"/><rect x="21" y="475" width="1" height="1" fill="#ffffff"/><rect x="10" y="476" width="1" height="1" fill="#a0a0a0"/><rect x="21" y="476" width="1" height="1" fill="#ffffff"/><rect x="10" y="477" width="1" height="1" fill="#a0a0a0"/><rect x="21" y="477" width="1" height="1" fill="#ffffff"/><rect x="11" y="478" width="1" height="1" fill="#a0a0a0"/><rect x="20" y="478" width="1" height="1" fill="#ffffff"/><rect x="11" y="479" width="1" height="1" fill="#a0a0a0"/><rect x="20" y="479" width="1" height="1" fill="#ffffff"/><rect x="12" y="480" width="1" height="1" fill="#ffffff"/><rect x="13" y="480" width="1" height="1" fill="#ffffff"/><rect x="18" y="480" width="1" height="1" fill="#ffffff"/><rect x="19" y="480" width="1" height="1" fill="#ffffff"/><rect x="14" y="481" width="1" height="1" fill="#ffffff"/><rect x="15" y="481" width="1" height="1" fill="#ffffff"/><rect x="16" y="481" width="1" height="1" fill="#ffffff"/><rect x="17" y="481" width="1" height="1" fill="#ffffff"/><rect x="14" y="471" width="1" height="1" fill="#696969"/><rect x="15" y="471" width="1" height="1" fill="#696969"/><rect x="16" y="471" width="1" height="1" fill="#696969"/><rect x="17" y="471" width="1" height="1" fill="#696969"/><rect x="12" y="472" width="1" height="1" fill="#696969"/><rect x="13" y="472" width="1" height="1" fill="#696969"/><rect x="18" y="472" width="1" height="1" fill="#696969"/><rect x="19" y="472" width="1" height="1" fill="#e3e3e3"/><rect x="12" y="473" width="1" height="1" fill="#696969"/><rect x="19" y="473" width="1" height="1" fill="#e3e3e3"/><rect x="11" y="474" width="1" height="1" fill="#696969"/><rect x="20" y="474" width="1" height="1" fill="#e3e3e3"/><rect x="11" y="475" width="1" height="1" fill="#696969"/><rect x="20" y="475" width="1" height="1" fill="#e3e3e3"/><rect x="11" y="476" width="1" height="1" fill="#696969"/><rect x="20" y="476" width="1" height="1" fill="#e3e3e3"/><rect x="11" y="477" width="1" height="1" fill="#696969"/><rect x="20" y="477" width="1" height="1" fill="#e3e3e3"/><rect x="12" y="478" width="1" height="1" fill="#696969"/><rect x="19" y="478" width="1" height="1" fill="#e3e3e3"/><rect x="12" y="479" width="1" height="1" fill="#e3e3e3"/><rect x="13" y="479" width="1" height="1" fill="#e3e3e3"/><rect x="18" y="479" width="1" height="1" fill="#e3e3e3"/><rect x="19" y="479" width="1" height="1" fill="#e3e3e3"/><rect x="14" y="480" width="1" height="1" fill="#e3e3e3"/><rect x="15" y="480" width="1" height="1" fill="#e3e3e3"/><rect x="16" y="480" width="1" height="1" fill="#e3e3e3"/><rect x="17" y="480" width="1" height="1" fill="#e3e3e3"/></g>
<text transform="scale(0.9,1)" x="31.78" y="481" class="b" textLength="52.80" lengthAdjust="spacing">Manual</text>
<g shape-rendering="crispEdges"><circle cx="16" cy="496" r="4.6" fill="#fff"/><rect x="14" y="490" width="1" height="1" fill="#a0a0a0"/><rect x="15" y="490" width="1" height="1" fill="#a0a0a0"/><rect x="16" y="490" width="1" height="1" fill="#a0a0a0"/><rect x="17" y="490" width="1" height="1" fill="#a0a0a0"/><rect x="12" y="491" width="1" height="1" fill="#a0a0a0"/><rect x="13" y="491" width="1" height="1" fill="#a0a0a0"/><rect x="18" y="491" width="1" height="1" fill="#a0a0a0"/><rect x="19" y="491" width="1" height="1" fill="#a0a0a0"/><rect x="11" y="492" width="1" height="1" fill="#a0a0a0"/><rect x="20" y="492" width="1" height="1" fill="#ffffff"/><rect x="11" y="493" width="1" height="1" fill="#a0a0a0"/><rect x="20" y="493" width="1" height="1" fill="#ffffff"/><rect x="10" y="494" width="1" height="1" fill="#a0a0a0"/><rect x="21" y="494" width="1" height="1" fill="#ffffff"/><rect x="10" y="495" width="1" height="1" fill="#a0a0a0"/><rect x="21" y="495" width="1" height="1" fill="#ffffff"/><rect x="10" y="496" width="1" height="1" fill="#a0a0a0"/><rect x="21" y="496" width="1" height="1" fill="#ffffff"/><rect x="10" y="497" width="1" height="1" fill="#a0a0a0"/><rect x="21" y="497" width="1" height="1" fill="#ffffff"/><rect x="11" y="498" width="1" height="1" fill="#a0a0a0"/><rect x="20" y="498" width="1" height="1" fill="#ffffff"/><rect x="11" y="499" width="1" height="1" fill="#a0a0a0"/><rect x="20" y="499" width="1" height="1" fill="#ffffff"/><rect x="12" y="500" width="1" height="1" fill="#ffffff"/><rect x="13" y="500" width="1" height="1" fill="#ffffff"/><rect x="18" y="500" width="1" height="1" fill="#ffffff"/><rect x="19" y="500" width="1" height="1" fill="#ffffff"/><rect x="14" y="501" width="1" height="1" fill="#ffffff"/><rect x="15" y="501" width="1" height="1" fill="#ffffff"/><rect x="16" y="501" width="1" height="1" fill="#ffffff"/><rect x="17" y="501" width="1" height="1" fill="#ffffff"/><rect x="14" y="491" width="1" height="1" fill="#696969"/><rect x="15" y="491" width="1" height="1" fill="#696969"/><rect x="16" y="491" width="1" height="1" fill="#696969"/><rect x="17" y="491" width="1" height="1" fill="#696969"/><rect x="12" y="492" width="1" height="1" fill="#696969"/><rect x="13" y="492" width="1" height="1" fill="#696969"/><rect x="18" y="492" width="1" height="1" fill="#696969"/><rect x="19" y="492" width="1" height="1" fill="#e3e3e3"/><rect x="12" y="493" width="1" height="1" fill="#696969"/><rect x="19" y="493" width="1" height="1" fill="#e3e3e3"/><rect x="11" y="494" width="1" height="1" fill="#696969"/><rect x="20" y="494" width="1" height="1" fill="#e3e3e3"/><rect x="11" y="495" width="1" height="1" fill="#696969"/><rect x="20" y="495" width="1" height="1" fill="#e3e3e3"/><rect x="11" y="496" width="1" height="1" fill="#696969"/><rect x="20" y="496" width="1" height="1" fill="#e3e3e3"/><rect x="11" y="497" width="1" height="1" fill="#696969"/><rect x="20" y="497" width="1" height="1" fill="#e3e3e3"/><rect x="12" y="498" width="1" height="1" fill="#696969"/><rect x="19" y="498" width="1" height="1" fill="#e3e3e3"/><rect x="12" y="499" width="1" height="1" fill="#e3e3e3"/><rect x="13" y="499" width="1" height="1" fill="#e3e3e3"/><rect x="18" y="499" width="1" height="1" fill="#e3e3e3"/><rect x="19" y="499" width="1" height="1" fill="#e3e3e3"/><rect x="14" y="500" width="1" height="1" fill="#e3e3e3"/><rect x="15" y="500" width="1" height="1" fill="#e3e3e3"/><rect x="16" y="500" width="1" height="1" fill="#e3e3e3"/><rect x="17" y="500" width="1" height="1" fill="#e3e3e3"/></g>
<text transform="scale(0.9,1)" x="31.78" y="501" class="b" textLength="104.99" lengthAdjust="spacing">UDP Pass thru</text>
<text transform="scale(0.9,1)" x="32.89" y="522" class="b" textLength="81.68" lengthAdjust="spacing">pks/sec = 0</text>
<g shape-rendering="crispEdges"><rect x="27" y="430" width="1" height="1" fill="#000"/><rect x="57" y="430" width="1" height="1" fill="#000"/><rect x="27" y="432" width="1" height="1" fill="#000"/><rect x="57" y="432" width="1" height="1" fill="#000"/><rect x="27" y="434" width="1" height="1" fill="#000"/><rect x="57" y="434" width="1" height="1" fill="#000"/><rect x="27" y="436" width="1" height="1" fill="#000"/><rect x="57" y="436" width="1" height="1" fill="#000"/><rect x="27" y="438" width="1" height="1" fill="#000"/><rect x="57" y="438" width="1" height="1" fill="#000"/><rect x="27" y="440" width="1" height="1" fill="#000"/><rect x="57" y="440" width="1" height="1" fill="#000"/><rect x="27" y="442" width="1" height="1" fill="#000"/><rect x="57" y="442" width="1" height="1" fill="#000"/></g>
<g shape-rendering="crispEdges"><rect x="159" y="369" width="30" height="20" fill="#646464"/><rect x="160" y="370" width="28" height="18" fill="#727272"/><rect x="160" y="370" width="27" height="17" fill="#a8a8a8"/><rect x="160" y="370" width="26" height="16" fill="#ffffff"/><rect x="161" y="371" width="25" height="15" fill="#f7f7f7"/><rect x="161" y="371" width="24" height="14" fill="#f0f0f0"/><rect x="171" y="378" width="6" height="1" fill="#000"/><rect x="173" y="375" width="2" height="7" fill="#000"/></g>
<text transform="scale(0.9,1)" x="177.33" y="402" class="b" textLength="31.70" lengthAdjust="spacing">Step</text>
<text transform="scale(0.9,1)" x="182.89" y="422" class="b" textLength="17.19" lengthAdjust="spacing">50</text>
<g shape-rendering="crispEdges"><rect x="159" y="429" width="30" height="20" fill="#646464"/><rect x="160" y="430" width="28" height="18" fill="#727272"/><rect x="160" y="430" width="27" height="17" fill="#a8a8a8"/><rect x="160" y="430" width="26" height="16" fill="#ffffff"/><rect x="161" y="431" width="25" height="15" fill="#f7f7f7"/><rect x="161" y="431" width="24" height="14" fill="#f0f0f0"/><rect x="172" y="438" width="4" height="1" fill="#000"/></g>
<text transform="scale(0.9,1)" x="294.00" y="382" class="b" textLength="51.66" lengthAdjust="spacing">Fpid / 1</text>
<g shape-rendering="crispEdges"><rect x="349" y="369" width="20" height="15" fill="#646464"/><rect x="350" y="370" width="18" height="13" fill="#727272"/><rect x="350" y="370" width="17" height="12" fill="#a8a8a8"/><rect x="350" y="370" width="16" height="11" fill="#ffffff"/><rect x="351" y="371" width="15" height="10" fill="#f7f7f7"/><rect x="351" y="371" width="14" height="9" fill="#f0f0f0"/><rect x="357" y="376" width="4" height="1" fill="#000"/></g>
<g shape-rendering="crispEdges"><rect x="371" y="369" width="20" height="15" fill="#646464"/><rect x="372" y="370" width="18" height="13" fill="#727272"/><rect x="372" y="370" width="17" height="12" fill="#a8a8a8"/><rect x="372" y="370" width="16" height="11" fill="#ffffff"/><rect x="373" y="371" width="15" height="10" fill="#f7f7f7"/><rect x="373" y="371" width="14" height="9" fill="#f0f0f0"/><rect x="378" y="376" width="6" height="1" fill="#000"/><rect x="380" y="373" width="2" height="7" fill="#000"/></g>
<text transform="scale(0.9,1)" x="294.00" y="407" class="b" textLength="62.75" lengthAdjust="spacing">Kp = 250</text>
<g shape-rendering="crispEdges"><rect x="349" y="394" width="20" height="15" fill="#646464"/><rect x="350" y="395" width="18" height="13" fill="#727272"/><rect x="350" y="395" width="17" height="12" fill="#a8a8a8"/><rect x="350" y="395" width="16" height="11" fill="#ffffff"/><rect x="351" y="396" width="15" height="10" fill="#f7f7f7"/><rect x="351" y="396" width="14" height="9" fill="#f0f0f0"/><rect x="357" y="401" width="4" height="1" fill="#000"/></g>
<g shape-rendering="crispEdges"><rect x="371" y="394" width="20" height="15" fill="#646464"/><rect x="372" y="395" width="18" height="13" fill="#727272"/><rect x="372" y="395" width="17" height="12" fill="#a8a8a8"/><rect x="372" y="395" width="16" height="11" fill="#ffffff"/><rect x="373" y="396" width="15" height="10" fill="#f7f7f7"/><rect x="373" y="396" width="14" height="9" fill="#f0f0f0"/><rect x="378" y="401" width="6" height="1" fill="#000"/><rect x="380" y="398" width="2" height="7" fill="#000"/></g>
<text transform="scale(0.9,1)" x="294.00" y="432" class="b" textLength="39.49" lengthAdjust="spacing">Ki = 1</text>
<g shape-rendering="crispEdges"><rect x="349" y="419" width="20" height="15" fill="#646464"/><rect x="350" y="420" width="18" height="13" fill="#727272"/><rect x="350" y="420" width="17" height="12" fill="#a8a8a8"/><rect x="350" y="420" width="16" height="11" fill="#ffffff"/><rect x="351" y="421" width="15" height="10" fill="#f7f7f7"/><rect x="351" y="421" width="14" height="9" fill="#f0f0f0"/><rect x="357" y="426" width="4" height="1" fill="#000"/></g>
<g shape-rendering="crispEdges"><rect x="371" y="419" width="20" height="15" fill="#646464"/><rect x="372" y="420" width="18" height="13" fill="#727272"/><rect x="372" y="420" width="17" height="12" fill="#a8a8a8"/><rect x="372" y="420" width="16" height="11" fill="#ffffff"/><rect x="373" y="421" width="15" height="10" fill="#f7f7f7"/><rect x="373" y="421" width="14" height="9" fill="#f0f0f0"/><rect x="378" y="426" width="6" height="1" fill="#000"/><rect x="380" y="423" width="2" height="7" fill="#000"/></g>
<text transform="scale(0.9,1)" x="294.00" y="457" class="b" textLength="42.78" lengthAdjust="spacing">Kd = 1</text>
<g shape-rendering="crispEdges"><rect x="349" y="444" width="20" height="15" fill="#646464"/><rect x="350" y="445" width="18" height="13" fill="#727272"/><rect x="350" y="445" width="17" height="12" fill="#a8a8a8"/><rect x="350" y="445" width="16" height="11" fill="#ffffff"/><rect x="351" y="446" width="15" height="10" fill="#f7f7f7"/><rect x="351" y="446" width="14" height="9" fill="#f0f0f0"/><rect x="357" y="451" width="4" height="1" fill="#000"/></g>
<g shape-rendering="crispEdges"><rect x="371" y="444" width="20" height="15" fill="#646464"/><rect x="372" y="445" width="18" height="13" fill="#727272"/><rect x="372" y="445" width="17" height="12" fill="#a8a8a8"/><rect x="372" y="445" width="16" height="11" fill="#ffffff"/><rect x="373" y="446" width="15" height="10" fill="#f7f7f7"/><rect x="373" y="446" width="14" height="9" fill="#f0f0f0"/><rect x="378" y="451" width="6" height="1" fill="#000"/><rect x="380" y="448" width="2" height="7" fill="#000"/></g>
<text transform="scale(0.9,1)" x="294.00" y="482" class="b" textLength="42.82" lengthAdjust="spacing">Ks = 1</text>
<g shape-rendering="crispEdges"><rect x="349" y="469" width="20" height="15" fill="#646464"/><rect x="350" y="470" width="18" height="13" fill="#727272"/><rect x="350" y="470" width="17" height="12" fill="#a8a8a8"/><rect x="350" y="470" width="16" height="11" fill="#ffffff"/><rect x="351" y="471" width="15" height="10" fill="#f7f7f7"/><rect x="351" y="471" width="14" height="9" fill="#f0f0f0"/><rect x="357" y="476" width="4" height="1" fill="#000"/></g>
<g shape-rendering="crispEdges"><rect x="371" y="469" width="20" height="15" fill="#646464"/><rect x="372" y="470" width="18" height="13" fill="#727272"/><rect x="372" y="470" width="17" height="12" fill="#a8a8a8"/><rect x="372" y="470" width="16" height="11" fill="#ffffff"/><rect x="373" y="471" width="15" height="10" fill="#f7f7f7"/><rect x="373" y="471" width="14" height="9" fill="#f0f0f0"/><rect x="378" y="476" width="6" height="1" fill="#000"/><rect x="380" y="473" width="2" height="7" fill="#000"/></g>
<path d="M354,398.5 H365 M354,404.5 H365 M353.5,399 V404 M364.5,399 V404" fill="none" stroke="#000" stroke-width="1" stroke-dasharray="1,1" shape-rendering="crispEdges"/>
<text transform="scale(0.9,1)" x="538.44" y="382" class="b" textLength="104.96" lengthAdjust="spacing">Fpwm = 25kHz</text>
<g shape-rendering="crispEdges"><rect x="614" y="369" width="20" height="15" fill="#646464"/><rect x="615" y="370" width="18" height="13" fill="#727272"/><rect x="615" y="370" width="17" height="12" fill="#a8a8a8"/><rect x="615" y="370" width="16" height="11" fill="#ffffff"/><rect x="616" y="371" width="15" height="10" fill="#f7f7f7"/><rect x="616" y="371" width="14" height="9" fill="#f0f0f0"/><rect x="622" y="376" width="4" height="1" fill="#000"/></g>
<g shape-rendering="crispEdges"><rect x="636" y="369" width="20" height="15" fill="#646464"/><rect x="637" y="370" width="18" height="13" fill="#727272"/><rect x="637" y="370" width="17" height="12" fill="#a8a8a8"/><rect x="637" y="370" width="16" height="11" fill="#ffffff"/><rect x="638" y="371" width="15" height="10" fill="#f7f7f7"/><rect x="638" y="371" width="14" height="9" fill="#f0f0f0"/><rect x="643" y="376" width="6" height="1" fill="#000"/><rect x="645" y="373" width="2" height="7" fill="#000"/></g>
<text transform="scale(0.9,1)" x="538.44" y="407" class="b" textLength="91.71" lengthAdjust="spacing">PWMmin = 0</text>
<g shape-rendering="crispEdges"><rect x="614" y="394" width="20" height="15" fill="#646464"/><rect x="615" y="395" width="18" height="13" fill="#727272"/><rect x="615" y="395" width="17" height="12" fill="#a8a8a8"/><rect x="615" y="395" width="16" height="11" fill="#ffffff"/><rect x="616" y="396" width="15" height="10" fill="#f7f7f7"/><rect x="616" y="396" width="14" height="9" fill="#f0f0f0"/><rect x="622" y="401" width="4" height="1" fill="#000"/></g>
<g shape-rendering="crispEdges"><rect x="636" y="394" width="20" height="15" fill="#646464"/><rect x="637" y="395" width="18" height="13" fill="#727272"/><rect x="637" y="395" width="17" height="12" fill="#a8a8a8"/><rect x="637" y="395" width="16" height="11" fill="#ffffff"/><rect x="638" y="396" width="15" height="10" fill="#f7f7f7"/><rect x="638" y="396" width="14" height="9" fill="#f0f0f0"/><rect x="643" y="401" width="6" height="1" fill="#000"/><rect x="645" y="398" width="2" height="7" fill="#000"/></g>
<text transform="scale(0.9,1)" x="538.44" y="432" class="b" textLength="113.94" lengthAdjust="spacing">PWMmax = 200</text>
<g shape-rendering="crispEdges"><rect x="614" y="419" width="20" height="15" fill="#646464"/><rect x="615" y="420" width="18" height="13" fill="#727272"/><rect x="615" y="420" width="17" height="12" fill="#a8a8a8"/><rect x="615" y="420" width="16" height="11" fill="#ffffff"/><rect x="616" y="421" width="15" height="10" fill="#f7f7f7"/><rect x="616" y="421" width="14" height="9" fill="#f0f0f0"/><rect x="622" y="426" width="4" height="1" fill="#000"/></g>
<g shape-rendering="crispEdges"><rect x="636" y="419" width="20" height="15" fill="#646464"/><rect x="637" y="420" width="18" height="13" fill="#727272"/><rect x="637" y="420" width="17" height="12" fill="#a8a8a8"/><rect x="637" y="420" width="16" height="11" fill="#ffffff"/><rect x="638" y="421" width="15" height="10" fill="#f7f7f7"/><rect x="638" y="421" width="14" height="9" fill="#f0f0f0"/><rect x="643" y="426" width="6" height="1" fill="#000"/><rect x="645" y="423" width="2" height="7" fill="#000"/></g>
<text transform="scale(0.9,1)" x="538.44" y="457" class="b" textLength="106.16" lengthAdjust="spacing">PWMrev = 200</text>
<g shape-rendering="crispEdges"><rect x="614" y="444" width="20" height="15" fill="#646464"/><rect x="615" y="445" width="18" height="13" fill="#727272"/><rect x="615" y="445" width="17" height="12" fill="#a8a8a8"/><rect x="615" y="445" width="16" height="11" fill="#ffffff"/><rect x="616" y="446" width="15" height="10" fill="#f7f7f7"/><rect x="616" y="446" width="14" height="9" fill="#f0f0f0"/><rect x="622" y="451" width="4" height="1" fill="#000"/></g>
<g shape-rendering="crispEdges"><rect x="636" y="444" width="20" height="15" fill="#646464"/><rect x="637" y="445" width="18" height="13" fill="#727272"/><rect x="637" y="445" width="17" height="12" fill="#a8a8a8"/><rect x="637" y="445" width="16" height="11" fill="#ffffff"/><rect x="638" y="446" width="15" height="10" fill="#f7f7f7"/><rect x="638" y="446" width="14" height="9" fill="#f0f0f0"/><rect x="643" y="451" width="6" height="1" fill="#000"/><rect x="645" y="448" width="2" height="7" fill="#000"/></g>
<text transform="scale(0.9,1)" x="832.89" y="382" class="b" textLength="123.85" lengthAdjust="spacing">Max Limits = 255</text>
<g shape-rendering="crispEdges"><rect x="887" y="369" width="20" height="15" fill="#646464"/><rect x="888" y="370" width="18" height="13" fill="#727272"/><rect x="888" y="370" width="17" height="12" fill="#a8a8a8"/><rect x="888" y="370" width="16" height="11" fill="#ffffff"/><rect x="889" y="371" width="15" height="10" fill="#f7f7f7"/><rect x="889" y="371" width="14" height="9" fill="#f0f0f0"/><rect x="895" y="376" width="4" height="1" fill="#000"/></g>
<g shape-rendering="crispEdges"><rect x="909" y="369" width="20" height="15" fill="#646464"/><rect x="910" y="370" width="18" height="13" fill="#727272"/><rect x="910" y="370" width="17" height="12" fill="#a8a8a8"/><rect x="910" y="370" width="16" height="11" fill="#ffffff"/><rect x="911" y="371" width="15" height="10" fill="#f7f7f7"/><rect x="911" y="371" width="14" height="9" fill="#f0f0f0"/><rect x="916" y="376" width="6" height="1" fill="#000"/><rect x="918" y="373" width="2" height="7" fill="#000"/></g>
<text transform="scale(0.9,1)" x="832.89" y="407" class="b" textLength="111.72" lengthAdjust="spacing">Clip Input = 255</text>
<g shape-rendering="crispEdges"><rect x="887" y="394" width="20" height="15" fill="#646464"/><rect x="888" y="395" width="18" height="13" fill="#727272"/><rect x="888" y="395" width="17" height="12" fill="#a8a8a8"/><rect x="888" y="395" width="16" height="11" fill="#ffffff"/><rect x="889" y="396" width="15" height="10" fill="#f7f7f7"/><rect x="889" y="396" width="14" height="9" fill="#f0f0f0"/><rect x="895" y="401" width="4" height="1" fill="#000"/></g>
<g shape-rendering="crispEdges"><rect x="909" y="394" width="20" height="15" fill="#646464"/><rect x="910" y="395" width="18" height="13" fill="#727272"/><rect x="910" y="395" width="17" height="12" fill="#a8a8a8"/><rect x="910" y="395" width="16" height="11" fill="#ffffff"/><rect x="911" y="396" width="15" height="10" fill="#f7f7f7"/><rect x="911" y="396" width="14" height="9" fill="#f0f0f0"/><rect x="916" y="401" width="6" height="1" fill="#000"/><rect x="918" y="398" width="2" height="7" fill="#000"/></g>
<text transform="scale(0.9,1)" x="832.89" y="432" class="b" textLength="99.41" lengthAdjust="spacing">Deadzone = 0</text>
<g shape-rendering="crispEdges"><rect x="887" y="419" width="20" height="15" fill="#646464"/><rect x="888" y="420" width="18" height="13" fill="#727272"/><rect x="888" y="420" width="17" height="12" fill="#a8a8a8"/><rect x="888" y="420" width="16" height="11" fill="#ffffff"/><rect x="889" y="421" width="15" height="10" fill="#f7f7f7"/><rect x="889" y="421" width="14" height="9" fill="#f0f0f0"/><rect x="895" y="426" width="4" height="1" fill="#000"/></g>
<g shape-rendering="crispEdges"><rect x="909" y="419" width="20" height="15" fill="#646464"/><rect x="910" y="420" width="18" height="13" fill="#727272"/><rect x="910" y="420" width="17" height="12" fill="#a8a8a8"/><rect x="910" y="420" width="16" height="11" fill="#ffffff"/><rect x="911" y="421" width="15" height="10" fill="#f7f7f7"/><rect x="911" y="421" width="14" height="9" fill="#f0f0f0"/><rect x="916" y="426" width="6" height="1" fill="#000"/><rect x="918" y="423" width="2" height="7" fill="#000"/></g>
<text transform="scale(0.9,1)" x="537.33" y="507" class="b" textLength="98.32" lengthAdjust="spacing">Tx: [ A 01 81 ]</text>
<text transform="scale(0.9,1)" x="538.44" y="532" class="b" textLength="98.29" lengthAdjust="spacing">Rx: [ a 16 43 ]</text>
<text transform="scale(0.9,1)" x="537.33" y="557" class="b" textLength="123.89" lengthAdjust="spacing">Calcs/sec = 4030</text>
<text transform="scale(0.9,1)" x="831.78" y="482" class="b" textLength="164.99" lengthAdjust="spacing">Arduino SMC3 ver 0.70</text>
<text transform="scale(0.9,1)" x="831.78" y="507" class="b" textLength="176.14" lengthAdjust="spacing">Windows Utility ver 1.01</text>
<text transform="scale(0.9,1)" x="831.78" y="532" class="b" textLength="113.90" lengthAdjust="spacing">UDP Port 20017</text>
<text transform="scale(0.9,1)" x="831.78" y="557" class="b" textLength="92.80" lengthAdjust="spacing">Comm Port 3</text>
<g shape-rendering="crispEdges"><rect x="159" y="517" width="50" height="25" fill="#646464"/><rect x="160" y="518" width="48" height="23" fill="#727272"/><rect x="160" y="518" width="47" height="22" fill="#a8a8a8"/><rect x="160" y="518" width="46" height="21" fill="#ffffff"/><rect x="161" y="519" width="45" height="20" fill="#f7f7f7"/><rect x="161" y="519" width="44" height="19" fill="#f0f0f0"/></g>
<text transform="scale(0.9,1)" x="186.22" y="535" class="b" textLength="36.11" lengthAdjust="spacing">Save</text>
<g shape-rendering="crispEdges"><rect x="209" y="517" width="50" height="25" fill="#646464"/><rect x="210" y="518" width="48" height="23" fill="#727272"/><rect x="210" y="518" width="47" height="22" fill="#a8a8a8"/><rect x="210" y="518" width="46" height="21" fill="#ffffff"/><rect x="211" y="519" width="45" height="20" fill="#f7f7f7"/><rect x="211" y="519" width="44" height="19" fill="#f0f0f0"/></g>
<text transform="scale(0.9,1)" x="242.89" y="535" class="b" textLength="35.04" lengthAdjust="spacing">Load</text>
<g shape-rendering="crispEdges"><rect x="292" y="517" width="50" height="25" fill="#646464"/><rect x="293" y="518" width="48" height="23" fill="#727272"/><rect x="293" y="518" width="47" height="22" fill="#a8a8a8"/><rect x="293" y="518" width="46" height="21" fill="#ffffff"/><rect x="294" y="519" width="45" height="20" fill="#f7f7f7"/><rect x="294" y="519" width="44" height="19" fill="#f0f0f0"/></g>
<text transform="scale(0.9,1)" x="331.78" y="535" class="b" textLength="40.53" lengthAdjust="spacing">-&gt; M2</text>
<g shape-rendering="crispEdges"><rect x="342" y="517" width="50" height="25" fill="#646464"/><rect x="343" y="518" width="48" height="23" fill="#727272"/><rect x="343" y="518" width="47" height="22" fill="#a8a8a8"/><rect x="343" y="518" width="46" height="21" fill="#ffffff"/><rect x="344" y="519" width="45" height="20" fill="#f7f7f7"/><rect x="344" y="519" width="44" height="19" fill="#f0f0f0"/></g>
<text transform="scale(0.9,1)" x="387.33" y="535" class="b" textLength="40.53" lengthAdjust="spacing">-&gt; M3</text>
<text transform="scale(0.9,1)" x="214.00" y="557" class="b" textLength="187.20" lengthAdjust="spacing">Settings have been saved</text>
<rect x="148" y="28" width="777" height="302" fill="#fff"/>
<rect x="149.5" y="29.5" width="774" height="299" fill="#fff" stroke="#000" stroke-width="1"/>
<g shape-rendering="crispEdges">
<rect x="198" y="51" width="701" height="1" fill="#c8c8c8"/>
<rect x="200" y="106" width="692" height="1" fill="#d7d7d7"/>
<rect x="200" y="116" width="692" height="1" fill="#ff0000"/>
<rect x="200" y="243" width="692" height="1" fill="#ff0000"/>
<rect x="198" y="308" width="710" height="1" fill="#d7d7d7"/>
<rect x="198" y="51" width="1" height="258" fill="#000"/><rect x="198" y="179" width="1" height="1" fill="#fff"/>
<line x1="198" y1="179.5" x2="892" y2="179.5" stroke="#d0d0d0" stroke-dasharray="2,2"/>
</g>
<polyline points="199.5,250.5 200.5,250.5 201.5,255.5 202.5,249.5 203.5,254.5 204.5,252.5 205.5,250.5 206.5,255.5 207.5,254.5 208.5,257.5 209.5,257.5 210.5,259.5 211.5,261.5 212.5,263.5 213.5,262.5 214.5,263.5 215.5,265.5 216.5,267.5 217.5,268.5 218.5,269.5 219.5,273.5 220.5,272.5 221.5,279.5 222.5,280.5 223.5,281.5 224.5,284.5 225.5,291.5 226.5,298.5 227.5,304.5 228.5,286.5 229.5,279.5 230.5,270.5 231.5,256.5 232.5,251.5 233.5,250.5 234.5,248.5 235.5,246.5 236.5,235.5 237.5,243.5 238.5,237.5 239.5,242.5 240.5,234.5 241.5,245.5 242.5,234.5 243.5,245.5 244.5,230.5 245.5,247.5 246.5,232.5 247.5,234.5 248.5,246.5 249.5,229.5 250.5,245.5 251.5,228.5 252.5,230.5 253.5,245.5 254.5,229.5 255.5,223.5 256.5,245.5 257.5,226.5 258.5,248.5 259.5,242.5 260.5,227.5 261.5,243.5 262.5,233.5 263.5,246.5 264.5,232.5 265.5,247.5 266.5,231.5 267.5,247.5 268.5,247.5 269.5,232.5 270.5,247.5 271.5,241.5 272.5,235.5 273.5,244.5 274.5,236.5 275.5,245.5 276.5,251.5 277.5,252.5 278.5,254.5 279.5,258.5 280.5,255.5 281.5,254.5 282.5,256.5 283.5,257.5 284.5,254.5 285.5,258.5 286.5,259.5 287.5,261.5 288.5,262.5 289.5,262.5 290.5,263.5 291.5,263.5 292.5,265.5 293.5,265.5 294.5,267.5 295.5,269.5 296.5,270.5 297.5,273.5 298.5,277.5 299.5,279.5 300.5,281.5 301.5,283.5 302.5,291.5 303.5,295.5 304.5,300.5 305.5,286.5 306.5,279.5 307.5,270.5 308.5,256.5 309.5,251.5 310.5,250.5 311.5,248.5 312.5,246.5 313.5,235.5 314.5,243.5 315.5,235.5 316.5,246.5 317.5,244.5 318.5,236.5 319.5,243.5 320.5,229.5 321.5,240.5 322.5,244.5 323.5,230.5 324.5,244.5 325.5,247.5 326.5,232.5 327.5,241.5 328.5,228.5 329.5,242.5 330.5,225.5 331.5,224.5 332.5,225.5 333.5,241.5 334.5,230.5 335.5,239.5 336.5,231.5 337.5,248.5 338.5,224.5 339.5,224.5 340.5,241.5 341.5,233.5 342.5,245.5 343.5,247.5 344.5,229.5 345.5,241.5 346.5,228.5 347.5,246.5 348.5,235.5 349.5,243.5 350.5,247.5 351.5,235.5 352.5,233.5 353.5,242.5 354.5,247.5 355.5,256.5 356.5,256.5 357.5,250.5 358.5,257.5 359.5,258.5 360.5,255.5 361.5,253.5 362.5,256.5 363.5,255.5 364.5,255.5 365.5,260.5 366.5,260.5 367.5,261.5 368.5,264.5 369.5,263.5 370.5,265.5 371.5,266.5 372.5,265.5 373.5,267.5 374.5,269.5 375.5,270.5 376.5,274.5 377.5,278.5 378.5,281.5 379.5,281.5 380.5,286.5 381.5,291.5 382.5,297.5 383.5,308.5 384.5,286.5 385.5,279.5 386.5,270.5 387.5,256.5 388.5,251.5 389.5,250.5 390.5,248.5 391.5,246.5 392.5,233.5 393.5,247.5 394.5,234.5 395.5,241.5 396.5,236.5 397.5,246.5 398.5,232.5 399.5,244.5 400.5,231.5 401.5,246.5 402.5,230.5 403.5,242.5 404.5,229.5 405.5,246.5 406.5,243.5 407.5,229.5 408.5,246.5 409.5,228.5 410.5,248.5 411.5,224.5 412.5,231.5 413.5,248.5 414.5,240.5 415.5,229.5 416.5,241.5 417.5,227.5 418.5,247.5 419.5,227.5 420.5,241.5 421.5,248.5 422.5,226.5 423.5,244.5 424.5,247.5 425.5,232.5 426.5,243.5 427.5,234.5 428.5,241.5 429.5,234.5 430.5,243.5 431.5,235.5 432.5,247.5 433.5,253.5 434.5,256.5 435.5,249.5 436.5,251.5 437.5,249.5 438.5,256.5 439.5,252.5 440.5,251.5 441.5,254.5 442.5,257.5 443.5,258.5 444.5,258.5 445.5,259.5 446.5,263.5 447.5,263.5 448.5,264.5 449.5,263.5 450.5,263.5 451.5,267.5 452.5,268.5 453.5,268.5 454.5,272.5 455.5,274.5 456.5,279.5 457.5,280.5 458.5,283.5 459.5,283.5 460.5,292.5 461.5,297.5 462.5,308.5 463.5,286.5 464.5,279.5 465.5,270.5 466.5,256.5 467.5,251.5 468.5,250.5 469.5,248.5 470.5,246.5 471.5,235.5 472.5,236.5 473.5,244.5 474.5,236.5 475.5,241.5 476.5,234.5 477.5,246.5 478.5,232.5 479.5,243.5 480.5,233.5 481.5,246.5 482.5,233.5 483.5,248.5 484.5,226.5 485.5,244.5 486.5,243.5 487.5,226.5 488.5,230.5 489.5,226.5 490.5,243.5 491.5,233.5 492.5,240.5 493.5,231.5 494.5,240.5 495.5,247.5 496.5,231.5 497.5,242.5 498.5,233.5 499.5,242.5 500.5,248.5 501.5,233.5 502.5,232.5 503.5,240.5 504.5,232.5 505.5,242.5 506.5,237.5 507.5,241.5 508.5,237.5 509.5,243.5 510.5,234.5 511.5,246.5 512.5,252.5 513.5,254.5 514.5,257.5 515.5,252.5 516.5,252.5 517.5,258.5 518.5,250.5 519.5,257.5 520.5,256.5 521.5,254.5 522.5,258.5 523.5,259.5 524.5,260.5 525.5,262.5 526.5,263.5 527.5,262.5 528.5,264.5 529.5,265.5 530.5,267.5 531.5,269.5 532.5,271.5 533.5,271.5 534.5,275.5 535.5,279.5 536.5,281.5 537.5,281.5 538.5,283.5 539.5,290.5 540.5,296.5 541.5,308.5 542.5,286.5 543.5,279.5 544.5,270.5 545.5,256.5 546.5,251.5 547.5,250.5 548.5,248.5 549.5,246.5 550.5,233.5 551.5,245.5 552.5,233.5 553.5,241.5 554.5,231.5 555.5,244.5 556.5,236.5 557.5,242.5 558.5,233.5 559.5,241.5 560.5,226.5 561.5,243.5 562.5,228.5 563.5,245.5 564.5,233.5 565.5,241.5 566.5,231.5 567.5,239.5 568.5,231.5 569.5,246.5 570.5,230.5 571.5,243.5 572.5,232.5 573.5,232.5 574.5,224.5 575.5,243.5 576.5,248.5 577.5,232.5 578.5,248.5 579.5,229.5 580.5,244.5 581.5,241.5 582.5,244.5 583.5,246.5 584.5,229.5 585.5,241.5 586.5,233.5 587.5,243.5 588.5,235.5 589.5,246.5 590.5,234.5 591.5,253.5 592.5,248.5 593.5,257.5 594.5,255.5 595.5,257.5 596.5,251.5 597.5,253.5 598.5,253.5 599.5,260.5 600.5,256.5 601.5,256.5 602.5,258.5 603.5,259.5 604.5,260.5 605.5,261.5 606.5,264.5 607.5,263.5 608.5,266.5 609.5,265.5 610.5,267.5 611.5,270.5 612.5,270.5 613.5,273.5 614.5,280.5 615.5,282.5 616.5,283.5 617.5,285.5 618.5,293.5 619.5,298.5 620.5,300.5 621.5,286.5 622.5,279.5 623.5,270.5 624.5,256.5 625.5,251.5 626.5,250.5 627.5,248.5 628.5,246.5 629.5,245.5 630.5,233.5 631.5,246.5 632.5,235.5 633.5,247.5 634.5,233.5 635.5,242.5 636.5,227.5 637.5,245.5 638.5,230.5 639.5,241.5 640.5,233.5 641.5,229.5 642.5,247.5 643.5,243.5 644.5,232.5 645.5,242.5 646.5,231.5 647.5,244.5 648.5,246.5 649.5,229.5 650.5,243.5 651.5,233.5 652.5,248.5 653.5,228.5 654.5,247.5 655.5,231.5 656.5,243.5 657.5,225.5 658.5,226.5 659.5,240.5 660.5,227.5 661.5,245.5 662.5,233.5 663.5,229.5 664.5,229.5 665.5,241.5 666.5,234.5 667.5,247.5 668.5,234.5 669.5,244.5 670.5,251.5 671.5,247.5 672.5,256.5 673.5,250.5 674.5,257.5 675.5,255.5 676.5,252.5 677.5,251.5 678.5,253.5 679.5,256.5 680.5,257.5 681.5,257.5 682.5,258.5 683.5,261.5 684.5,263.5 685.5,263.5 686.5,263.5 687.5,265.5 688.5,265.5 689.5,267.5 690.5,270.5 691.5,273.5 692.5,274.5 693.5,279.5 694.5,281.5 695.5,281.5 696.5,284.5 697.5,293.5 698.5,298.5 699.5,305.5 700.5,286.5 701.5,279.5 702.5,270.5 703.5,256.5 704.5,251.5 705.5,250.5 706.5,248.5 707.5,246.5 708.5,238.5 709.5,245.5 710.5,236.5 711.5,247.5 712.5,237.5 713.5,243.5 714.5,235.5 715.5,246.5 716.5,234.5 717.5,232.5 718.5,233.5 719.5,246.5 720.5,225.5 721.5,241.5 722.5,230.5 723.5,248.5 724.5,230.5 725.5,248.5 726.5,233.5 727.5,243.5 728.5,247.5 729.5,223.5 730.5,230.5 731.5,248.5 732.5,234.5 733.5,243.5 734.5,231.5 735.5,239.5 736.5,231.5 737.5,234.5 738.5,233.5 739.5,247.5 740.5,243.5 741.5,232.5 742.5,247.5 743.5,234.5 744.5,237.5 745.5,246.5 746.5,237.5 747.5,241.5 748.5,254.5 749.5,249.5 750.5,255.5 751.5,257.5 752.5,252.5 753.5,251.5 754.5,258.5 755.5,256.5 756.5,253.5 757.5,256.5 758.5,256.5 759.5,258.5 760.5,258.5 761.5,262.5 762.5,264.5 763.5,264.5 764.5,265.5 765.5,263.5 766.5,265.5 767.5,268.5 768.5,271.5 769.5,273.5 770.5,273.5 771.5,277.5 772.5,281.5 773.5,282.5 774.5,286.5 775.5,290.5 776.5,298.5 777.5,305.5 778.5,286.5 779.5,279.5 780.5,270.5 781.5,256.5 782.5,251.5 783.5,250.5 784.5,248.5 785.5,246.5 786.5,233.5 787.5,245.5 788.5,235.5 789.5,246.5 790.5,235.5 791.5,242.5 792.5,236.5 793.5,243.5 794.5,247.5 795.5,242.5 796.5,234.5 797.5,246.5 798.5,232.5 799.5,245.5 800.5,226.5 801.5,227.5 802.5,247.5 803.5,228.5 804.5,246.5 805.5,231.5 806.5,240.5 807.5,244.5 808.5,229.5 809.5,228.5 810.5,247.5 811.5,223.5 812.5,244.5 813.5,247.5 814.5,240.5 815.5,234.5 816.5,248.5 817.5,227.5 818.5,247.5 819.5,234.5 820.5,247.5 821.5,232.5 822.5,242.5 823.5,236.5 824.5,243.5 825.5,234.5 826.5,241.5 827.5,248.5 828.5,253.5 829.5,250.5 830.5,251.5 831.5,250.5 832.5,256.5 833.5,254.5 834.5,250.5 835.5,251.5 836.5,255.5 837.5,257.5 838.5,259.5 839.5,259.5 840.5,260.5 841.5,263.5 842.5,263.5 843.5,263.5 844.5,264.5 845.5,267.5 846.5,267.5 847.5,270.5 848.5,271.5 849.5,274.5 850.5,279.5 851.5,282.5 852.5,282.5 853.5,284.5 854.5,292.5 855.5,296.5 856.5,302.5 857.5,286.5 858.5,279.5 859.5,270.5 860.5,256.5 861.5,251.5 862.5,250.5 863.5,248.5 864.5,246.5 865.5,233.5 866.5,246.5 867.5,232.5 868.5,242.5 869.5,233.5 870.5,247.5 871.5,231.5 872.5,244.5 873.5,233.5 874.5,247.5 875.5,230.5 876.5,225.5 877.5,240.5 878.5,248.5 879.5,234.5 880.5,230.5 881.5,227.5 882.5,232.5 883.5,241.5 884.5,224.5 885.5,232.5 886.5,243.5 887.5,229.5 888.5,241.5 889.5,224.5 890.5,244.5 891.5,234.5 892.5,233.5" fill="none" stroke="#ffff00" stroke-width="1" shape-rendering="crispEdges"/>
<polyline points="199.5,148.5 200.5,147.5 201.5,145.5 202.5,144.5 203.5,142.5 204.5,141.5 205.5,140.5 206.5,138.5 207.5,137.5 208.5,136.5 209.5,135.5 210.5,134.5 211.5,133.5 212.5,133.5 213.5,133.5 214.5,133.5 215.5,133.5 216.5,133.5 217.5,133.5 218.5,133.5 219.5,133.5 220.5,133.5 221.5,133.5 222.5,133.5 223.5,133.5 224.5,133.5 225.5,133.5 226.5,133.5 227.5,133.5 228.5,133.5 229.5,133.5 230.5,133.5 231.5,133.5 232.5,133.5 233.5,134.5 234.5,135.5 235.5,136.5 236.5,137.5 237.5,138.5 238.5,139.5 239.5,140.5 240.5,142.5 241.5,143.5 242.5,144.5 243.5,146.5 244.5,147.5 245.5,149.5 246.5,150.5 247.5,152.5 248.5,154.5 249.5,156.5 250.5,157.5 251.5,159.5 252.5,161.5 253.5,163.5 254.5,165.5 255.5,167.5 256.5,169.5 257.5,171.5 258.5,173.5 259.5,175.5 260.5,177.5 261.5,179.5 262.5,181.5 263.5,183.5 264.5,185.5 265.5,187.5 266.5,189.5 267.5,191.5 268.5,193.5 269.5,194.5 270.5,196.5 271.5,198.5 272.5,200.5 273.5,202.5 274.5,204.5 275.5,205.5 276.5,207.5 277.5,209.5 278.5,210.5 279.5,212.5 280.5,213.5 281.5,215.5 282.5,216.5 283.5,217.5 284.5,219.5 285.5,220.5 286.5,221.5 287.5,222.5 288.5,223.5 289.5,224.5 290.5,225.5 291.5,225.5 292.5,226.5 293.5,226.5 294.5,226.5 295.5,226.5 296.5,226.5 297.5,226.5 298.5,226.5 299.5,226.5 300.5,226.5 301.5,226.5 302.5,226.5 303.5,226.5 304.5,226.5 305.5,226.5 306.5,226.5 307.5,226.5 308.5,226.5 309.5,226.5 310.5,225.5 311.5,224.5 312.5,223.5 313.5,222.5 314.5,221.5 315.5,220.5 316.5,219.5 317.5,218.5 318.5,217.5 319.5,215.5 320.5,214.5 321.5,213.5 322.5,211.5 323.5,209.5 324.5,208.5 325.5,206.5 326.5,204.5 327.5,203.5 328.5,201.5 329.5,199.5 330.5,197.5 331.5,195.5 332.5,194.5 333.5,192.5 334.5,190.5 335.5,188.5 336.5,186.5 337.5,184.5 338.5,182.5 339.5,180.5 340.5,178.5 341.5,176.5 342.5,174.5 343.5,172.5 344.5,170.5 345.5,168.5 346.5,166.5 347.5,164.5 348.5,162.5 349.5,160.5 350.5,158.5 351.5,157.5 352.5,155.5 353.5,153.5 354.5,151.5 355.5,150.5 356.5,148.5 357.5,147.5 358.5,145.5 359.5,144.5 360.5,142.5 361.5,141.5 362.5,140.5 363.5,138.5 364.5,137.5 365.5,136.5 366.5,135.5 367.5,134.5 368.5,133.5 369.5,133.5 370.5,133.5 371.5,133.5 372.5,133.5 373.5,133.5 374.5,133.5 375.5,133.5 376.5,133.5 377.5,133.5 378.5,133.5 379.5,133.5 380.5,133.5 381.5,133.5 382.5,133.5 383.5,133.5 384.5,133.5 385.5,133.5 386.5,133.5 387.5,133.5 388.5,133.5 389.5,133.5 390.5,134.5 391.5,135.5 392.5,136.5 393.5,137.5 394.5,138.5 395.5,139.5 396.5,140.5 397.5,140.5 398.5,140.5 399.5,140.5 400.5,140.5 401.5,140.5 402.5,149.5 403.5,151.5 404.5,152.5 405.5,154.5 406.5,156.5 407.5,158.5 408.5,159.5 409.5,161.5 410.5,163.5 411.5,165.5 412.5,167.5 413.5,169.5 414.5,171.5 415.5,173.5 416.5,175.5 417.5,177.5 418.5,179.5 419.5,181.5 420.5,183.5 421.5,185.5 422.5,187.5 423.5,189.5 424.5,191.5 425.5,193.5 426.5,195.5 427.5,197.5 428.5,198.5 429.5,200.5 430.5,202.5 431.5,204.5 432.5,206.5 433.5,207.5 434.5,209.5 435.5,210.5 436.5,212.5 437.5,213.5 438.5,215.5 439.5,216.5 440.5,217.5 441.5,219.5 442.5,220.5 443.5,221.5 444.5,222.5 445.5,223.5 446.5,224.5 447.5,225.5 448.5,225.5 449.5,226.5 450.5,226.5 451.5,226.5 452.5,226.5 453.5,226.5 454.5,226.5 455.5,226.5 456.5,226.5 457.5,226.5 458.5,226.5 459.5,226.5 460.5,226.5 461.5,226.5 462.5,226.5 463.5,226.5 464.5,226.5 465.5,226.5 466.5,226.5 467.5,225.5 468.5,224.5 469.5,223.5 470.5,222.5 471.5,221.5 472.5,220.5 473.5,219.5 474.5,218.5 475.5,217.5 476.5,215.5 477.5,214.5 478.5,212.5 479.5,211.5 480.5,209.5 481.5,208.5 482.5,206.5 483.5,204.5 484.5,203.5 485.5,201.5 486.5,199.5 487.5,197.5 488.5,195.5 489.5,193.5 490.5,191.5 491.5,189.5 492.5,188.5 493.5,186.5 494.5,184.5 495.5,182.5 496.5,180.5 497.5,178.5 498.5,176.5 499.5,174.5 500.5,172.5 501.5,170.5 502.5,168.5 503.5,166.5 504.5,164.5 505.5,162.5 506.5,160.5 507.5,158.5 508.5,156.5 509.5,155.5 510.5,153.5 511.5,151.5 512.5,150.5 513.5,148.5 514.5,146.5 515.5,145.5 516.5,143.5 517.5,142.5 518.5,141.5 519.5,139.5 520.5,138.5 521.5,137.5 522.5,136.5 523.5,135.5 524.5,134.5 525.5,133.5 526.5,133.5 527.5,133.5 528.5,133.5 529.5,133.5 530.5,133.5 531.5,133.5 532.5,133.5 533.5,133.5 534.5,133.5 535.5,133.5 536.5,133.5 537.5,133.5 538.5,133.5 539.5,133.5 540.5,133.5 541.5,133.5 542.5,133.5 543.5,133.5 544.5,133.5 545.5,133.5 546.5,133.5 547.5,134.5 548.5,135.5 549.5,136.5 550.5,137.5 551.5,138.5 552.5,139.5 553.5,140.5 554.5,142.5 555.5,143.5 556.5,145.5 557.5,146.5 558.5,148.5 559.5,149.5 560.5,151.5 561.5,153.5 562.5,154.5 563.5,156.5 564.5,158.5 565.5,160.5 566.5,161.5 567.5,163.5 568.5,165.5 569.5,167.5 570.5,169.5 571.5,171.5 572.5,173.5 573.5,175.5 574.5,177.5 575.5,179.5 576.5,181.5 577.5,183.5 578.5,185.5 579.5,187.5 580.5,189.5 581.5,191.5 582.5,193.5 583.5,195.5 584.5,197.5 585.5,199.5 586.5,200.5 587.5,202.5 588.5,204.5 589.5,206.5 590.5,207.5 591.5,209.5 592.5,211.5 593.5,212.5 594.5,214.5 595.5,215.5 596.5,216.5 597.5,218.5 598.5,219.5 599.5,220.5 600.5,221.5 601.5,222.5 602.5,223.5 603.5,224.5 604.5,225.5 605.5,226.5 606.5,226.5 607.5,226.5 608.5,226.5 609.5,226.5 610.5,226.5 611.5,226.5 612.5,226.5 613.5,226.5 614.5,226.5 615.5,226.5 616.5,226.5 617.5,226.5 618.5,226.5 619.5,226.5 620.5,226.5 621.5,226.5 622.5,226.5 623.5,226.5 624.5,225.5 625.5,224.5 626.5,223.5 627.5,222.5 628.5,221.5 629.5,220.5 630.5,219.5 631.5,218.5 632.5,216.5 633.5,215.5 634.5,214.5 635.5,212.5 636.5,211.5 637.5,209.5 638.5,208.5 639.5,206.5 640.5,204.5 641.5,202.5 642.5,201.5 643.5,199.5 644.5,197.5 645.5,195.5 646.5,193.5 647.5,191.5 648.5,189.5 649.5,187.5 650.5,185.5 651.5,183.5 652.5,181.5 653.5,179.5 654.5,177.5 655.5,175.5 656.5,173.5 657.5,171.5 658.5,169.5 659.5,167.5 660.5,165.5 661.5,164.5 662.5,162.5 663.5,160.5 664.5,158.5 665.5,156.5 666.5,154.5 667.5,153.5 668.5,151.5 669.5,149.5 670.5,148.5 671.5,148.5 672.5,148.5 673.5,148.5 674.5,148.5 675.5,148.5 676.5,139.5 677.5,138.5 678.5,137.5 679.5,136.5 680.5,135.5 681.5,134.5 682.5,133.5 683.5,133.5 684.5,133.5 685.5,133.5 686.5,133.5 687.5,133.5 688.5,133.5 689.5,133.5 690.5,133.5 691.5,133.5 692.5,133.5 693.5,133.5 694.5,133.5 695.5,133.5 696.5,133.5 697.5,133.5 698.5,133.5 699.5,133.5 700.5,133.5 701.5,133.5 702.5,133.5 703.5,133.5 704.5,134.5 705.5,135.5 706.5,136.5 707.5,137.5 708.5,138.5 709.5,139.5 710.5,141.5 711.5,142.5 712.5,143.5 713.5,145.5 714.5,146.5 715.5,148.5 716.5,149.5 717.5,151.5 718.5,153.5 719.5,154.5 720.5,156.5 721.5,158.5 722.5,160.5 723.5,162.5 724.5,164.5 725.5,165.5 726.5,167.5 727.5,169.5 728.5,171.5 729.5,173.5 730.5,175.5 731.5,177.5 732.5,179.5 733.5,181.5 734.5,183.5 735.5,185.5 736.5,187.5 737.5,189.5 738.5,191.5 739.5,193.5 740.5,195.5 741.5,197.5 742.5,199.5 743.5,201.5 744.5,202.5 745.5,204.5 746.5,206.5 747.5,208.5 748.5,209.5 749.5,211.5 750.5,212.5 751.5,214.5 752.5,215.5 753.5,216.5 754.5,218.5 755.5,219.5 756.5,220.5 757.5,221.5 758.5,222.5 759.5,223.5 760.5,224.5 761.5,225.5 762.5,226.5 763.5,226.5 764.5,226.5 765.5,226.5 766.5,226.5 767.5,226.5 768.5,226.5 769.5,226.5 770.5,226.5 771.5,226.5 772.5,226.5 773.5,226.5 774.5,226.5 775.5,226.5 776.5,226.5 777.5,226.5 778.5,226.5 779.5,226.5 780.5,226.5 781.5,225.5 782.5,224.5 783.5,223.5 784.5,222.5 785.5,221.5 786.5,220.5 787.5,219.5 788.5,218.5 789.5,216.5 790.5,215.5 791.5,214.5 792.5,212.5 793.5,211.5 794.5,209.5 795.5,207.5 796.5,206.5 797.5,204.5 798.5,202.5 799.5,200.5 800.5,199.5 801.5,197.5 802.5,195.5 803.5,193.5 804.5,191.5 805.5,189.5 806.5,187.5 807.5,185.5 808.5,183.5 809.5,181.5 810.5,179.5 811.5,177.5 812.5,175.5 813.5,173.5 814.5,171.5 815.5,169.5 816.5,167.5 817.5,165.5 818.5,163.5 819.5,161.5 820.5,160.5 821.5,158.5 822.5,156.5 823.5,154.5 824.5,153.5 825.5,151.5 826.5,149.5 827.5,148.5 828.5,146.5 829.5,145.5 830.5,143.5 831.5,142.5 832.5,140.5 833.5,139.5 834.5,138.5 835.5,137.5 836.5,136.5 837.5,135.5 838.5,134.5 839.5,133.5 840.5,133.5 841.5,133.5 842.5,133.5 843.5,133.5 844.5,133.5 845.5,133.5 846.5,133.5 847.5,133.5 848.5,133.5 849.5,133.5 850.5,133.5 851.5,133.5 852.5,133.5 853.5,133.5 854.5,133.5 855.5,133.5 856.5,133.5 857.5,133.5 858.5,133.5 859.5,133.5 860.5,133.5 861.5,134.5 862.5,135.5 863.5,136.5 864.5,137.5 865.5,138.5 866.5,139.5 867.5,141.5 868.5,142.5 869.5,143.5 870.5,145.5 871.5,146.5 872.5,148.5 873.5,150.5 874.5,151.5 875.5,153.5 876.5,155.5 877.5,156.5 878.5,158.5 879.5,160.5 880.5,162.5 881.5,164.5 882.5,166.5 883.5,168.5 884.5,170.5 885.5,172.5 886.5,174.5 887.5,176.5 888.5,178.5 889.5,180.5 890.5,182.5 891.5,184.5 892.5,186.5" fill="none" stroke="#00ff00" stroke-width="1" shape-rendering="crispEdges"/>
<polyline points="199.5,139.5 200.5,138.5 201.5,137.5 202.5,136.5 203.5,135.5 204.5,134.5 205.5,133.5 206.5,132.5 207.5,131.5 208.5,131.5 209.5,130.5 210.5,130.5 211.5,129.5 212.5,129.5 213.5,129.5 214.5,129.5 215.5,129.5 216.5,129.5 217.5,129.5 218.5,129.5 219.5,129.5 220.5,130.5 221.5,130.5 222.5,131.5 223.5,131.5 224.5,132.5 225.5,133.5 226.5,133.5 227.5,134.5 228.5,135.5 229.5,136.5 230.5,137.5 231.5,139.5 232.5,140.5 233.5,141.5 234.5,142.5 235.5,144.5 236.5,145.5 237.5,147.5 238.5,148.5 239.5,150.5 240.5,152.5 241.5,153.5 242.5,155.5 243.5,157.5 244.5,159.5 245.5,161.5 246.5,162.5 247.5,164.5 248.5,166.5 249.5,168.5 250.5,170.5 251.5,172.5 252.5,174.5 253.5,176.5 254.5,178.5 255.5,180.5 256.5,182.5 257.5,184.5 258.5,186.5 259.5,188.5 260.5,190.5 261.5,192.5 262.5,194.5 263.5,196.5 264.5,198.5 265.5,200.5 266.5,201.5 267.5,203.5 268.5,205.5 269.5,207.5 270.5,208.5 271.5,210.5 272.5,211.5 273.5,213.5 274.5,214.5 275.5,216.5 276.5,217.5 277.5,218.5 278.5,219.5 279.5,221.5 280.5,222.5 281.5,223.5 282.5,224.5 283.5,224.5 284.5,225.5 285.5,226.5 286.5,227.5 287.5,227.5 288.5,228.5 289.5,228.5 290.5,228.5 291.5,229.5 292.5,229.5 293.5,229.5 294.5,229.5 295.5,229.5 296.5,229.5 297.5,228.5 298.5,228.5 299.5,228.5 300.5,227.5 301.5,227.5 302.5,226.5 303.5,225.5 304.5,224.5 305.5,224.5 306.5,223.5 307.5,222.5 308.5,221.5 309.5,220.5 310.5,218.5 311.5,217.5 312.5,216.5 313.5,214.5 314.5,213.5 315.5,211.5 316.5,210.5 317.5,208.5 318.5,207.5 319.5,205.5 320.5,203.5 321.5,202.5 322.5,200.5 323.5,198.5 324.5,196.5 325.5,194.5 326.5,192.5 327.5,190.5 328.5,188.5 329.5,186.5 330.5,184.5 331.5,182.5 332.5,180.5 333.5,178.5 334.5,176.5 335.5,174.5 336.5,172.5 337.5,170.5 338.5,168.5 339.5,166.5 340.5,165.5 341.5,163.5 342.5,161.5 343.5,159.5 344.5,157.5 345.5,155.5 346.5,154.5 347.5,152.5 348.5,150.5 349.5,149.5 350.5,147.5 351.5,145.5 352.5,144.5 353.5,143.5 354.5,141.5 355.5,140.5 356.5,139.5 357.5,138.5 358.5,136.5 359.5,135.5 360.5,134.5 361.5,134.5 362.5,133.5 363.5,132.5 364.5,131.5 365.5,131.5 366.5,130.5 367.5,130.5 368.5,129.5 369.5,129.5 370.5,129.5 371.5,129.5 372.5,129.5 373.5,129.5 374.5,129.5 375.5,129.5 376.5,129.5 377.5,130.5 378.5,130.5 379.5,131.5 380.5,131.5 381.5,132.5 382.5,133.5 383.5,134.5 384.5,134.5 385.5,135.5 386.5,136.5 387.5,138.5 388.5,139.5 389.5,140.5 390.5,141.5 391.5,143.5 392.5,144.5 393.5,145.5 394.5,147.5 395.5,149.5 396.5,150.5 397.5,152.5 398.5,154.5 399.5,155.5 400.5,157.5 401.5,159.5 402.5,161.5 403.5,163.5 404.5,165.5 405.5,166.5 406.5,168.5 407.5,170.5 408.5,172.5 409.5,174.5 410.5,176.5 411.5,178.5 412.5,180.5 413.5,182.5 414.5,184.5 415.5,186.5 416.5,188.5 417.5,190.5 418.5,192.5 419.5,194.5 420.5,196.5 421.5,198.5 422.5,200.5 423.5,202.5 424.5,203.5 425.5,205.5 426.5,207.5 427.5,208.5 428.5,210.5 429.5,211.5 430.5,213.5 431.5,214.5 432.5,216.5 433.5,217.5 434.5,218.5 435.5,220.5 436.5,221.5 437.5,222.5 438.5,223.5 439.5,224.5 440.5,224.5 441.5,225.5 442.5,226.5 443.5,227.5 444.5,227.5 445.5,228.5 446.5,228.5 447.5,228.5 448.5,229.5 449.5,229.5 450.5,229.5 451.5,229.5 452.5,229.5 453.5,229.5 454.5,228.5 455.5,228.5 456.5,228.5 457.5,227.5 458.5,227.5 459.5,226.5 460.5,225.5 461.5,224.5 462.5,224.5 463.5,223.5 464.5,222.5 465.5,221.5 466.5,219.5 467.5,218.5 468.5,217.5 469.5,216.5 470.5,214.5 471.5,213.5 472.5,211.5 473.5,210.5 474.5,208.5 475.5,207.5 476.5,205.5 477.5,203.5 478.5,201.5 479.5,200.5 480.5,198.5 481.5,196.5 482.5,194.5 483.5,192.5 484.5,190.5 485.5,188.5 486.5,186.5 487.5,184.5 488.5,182.5 489.5,180.5 490.5,178.5 491.5,176.5 492.5,174.5 493.5,172.5 494.5,170.5 495.5,168.5 496.5,166.5 497.5,164.5 498.5,162.5 499.5,161.5 500.5,159.5 501.5,157.5 502.5,155.5 503.5,153.5 504.5,152.5 505.5,150.5 506.5,148.5 507.5,147.5 508.5,145.5 509.5,144.5 510.5,142.5 511.5,141.5 512.5,140.5 513.5,139.5 514.5,137.5 515.5,136.5 516.5,135.5 517.5,134.5 518.5,133.5 519.5,133.5 520.5,132.5 521.5,131.5 522.5,131.5 523.5,130.5 524.5,130.5 525.5,129.5 526.5,129.5 527.5,129.5 528.5,129.5 529.5,129.5 530.5,129.5 531.5,129.5 532.5,129.5 533.5,129.5 534.5,130.5 535.5,130.5 536.5,131.5 537.5,131.5 538.5,132.5 539.5,133.5 540.5,134.5 541.5,135.5 542.5,136.5 543.5,137.5 544.5,138.5 545.5,139.5 546.5,140.5 547.5,141.5 548.5,143.5 549.5,144.5 550.5,146.5 551.5,147.5 552.5,149.5 553.5,150.5 554.5,152.5 555.5,154.5 556.5,155.5 557.5,157.5 558.5,159.5 559.5,161.5 560.5,163.5 561.5,165.5 562.5,167.5 563.5,169.5 564.5,171.5 565.5,173.5 566.5,175.5 567.5,177.5 568.5,179.5 569.5,181.5 570.5,183.5 571.5,185.5 572.5,187.5 573.5,188.5 574.5,190.5 575.5,192.5 576.5,194.5 577.5,196.5 578.5,198.5 579.5,200.5 580.5,202.5 581.5,203.5 582.5,205.5 583.5,207.5 584.5,208.5 585.5,210.5 586.5,212.5 587.5,213.5 588.5,215.5 589.5,216.5 590.5,217.5 591.5,218.5 592.5,220.5 593.5,221.5 594.5,222.5 595.5,223.5 596.5,224.5 597.5,225.5 598.5,225.5 599.5,226.5 600.5,227.5 601.5,227.5 602.5,228.5 603.5,228.5 604.5,228.5 605.5,229.5 606.5,229.5 607.5,229.5 608.5,229.5 609.5,229.5 610.5,229.5 611.5,228.5 612.5,228.5 613.5,228.5 614.5,227.5 615.5,226.5 616.5,226.5 617.5,225.5 618.5,224.5 619.5,223.5 620.5,223.5 621.5,222.5 622.5,220.5 623.5,219.5 624.5,218.5 625.5,217.5 626.5,215.5 627.5,214.5 628.5,213.5 629.5,211.5 630.5,210.5 631.5,208.5 632.5,206.5 633.5,205.5 634.5,203.5 635.5,201.5 636.5,199.5 637.5,198.5 638.5,196.5 639.5,194.5 640.5,192.5 641.5,190.5 642.5,188.5 643.5,186.5 644.5,184.5 645.5,182.5 646.5,180.5 647.5,178.5 648.5,176.5 649.5,174.5 650.5,172.5 651.5,170.5 652.5,168.5 653.5,166.5 654.5,164.5 655.5,162.5 656.5,160.5 657.5,159.5 658.5,157.5 659.5,155.5 660.5,153.5 661.5,151.5 662.5,150.5 663.5,148.5 664.5,147.5 665.5,145.5 666.5,144.5 667.5,142.5 668.5,141.5 669.5,140.5 670.5,138.5 671.5,137.5 672.5,136.5 673.5,135.5 674.5,134.5 675.5,133.5 676.5,133.5 677.5,132.5 678.5,131.5 679.5,131.5 680.5,130.5 681.5,130.5 682.5,129.5 683.5,129.5 684.5,129.5 685.5,129.5 686.5,129.5 687.5,129.5 688.5,129.5 689.5,129.5 690.5,130.5 691.5,130.5 692.5,130.5 693.5,131.5 694.5,131.5 695.5,132.5 696.5,133.5 697.5,134.5 698.5,135.5 699.5,136.5 700.5,137.5 701.5,138.5 702.5,139.5 703.5,140.5 704.5,142.5 705.5,143.5 706.5,144.5 707.5,146.5 708.5,147.5 709.5,149.5 710.5,150.5 711.5,152.5 712.5,154.5 713.5,156.5 714.5,157.5 715.5,159.5 716.5,161.5 717.5,163.5 718.5,165.5 719.5,167.5 720.5,169.5 721.5,171.5 722.5,173.5 723.5,175.5 724.5,177.5 725.5,179.5 726.5,181.5 727.5,183.5 728.5,185.5 729.5,187.5 730.5,189.5 731.5,191.5 732.5,193.5 733.5,194.5 734.5,196.5 735.5,198.5 736.5,200.5 737.5,202.5 738.5,204.5 739.5,205.5 740.5,207.5 741.5,209.5 742.5,210.5 743.5,212.5 744.5,213.5 745.5,215.5 746.5,216.5 747.5,217.5 748.5,219.5 749.5,220.5 750.5,221.5 751.5,222.5 752.5,223.5 753.5,224.5 754.5,225.5 755.5,225.5 756.5,226.5 757.5,227.5 758.5,227.5 759.5,228.5 760.5,228.5 761.5,228.5 762.5,229.5 763.5,229.5 764.5,229.5 765.5,229.5 766.5,229.5 767.5,228.5 768.5,228.5 769.5,228.5 770.5,227.5 771.5,227.5 772.5,226.5 773.5,226.5 774.5,225.5 775.5,224.5 776.5,223.5 777.5,222.5 778.5,221.5 779.5,220.5 780.5,219.5 781.5,218.5 782.5,217.5 783.5,215.5 784.5,214.5 785.5,213.5 786.5,211.5 787.5,209.5 788.5,208.5 789.5,206.5 790.5,204.5 791.5,203.5 792.5,201.5 793.5,199.5 794.5,197.5 795.5,195.5 796.5,194.5 797.5,192.5 798.5,190.5 799.5,188.5 800.5,186.5 801.5,184.5 802.5,182.5 803.5,180.5 804.5,178.5 805.5,176.5 806.5,174.5 807.5,172.5 808.5,170.5 809.5,168.5 810.5,166.5 811.5,164.5 812.5,162.5 813.5,160.5 814.5,158.5 815.5,157.5 816.5,155.5 817.5,153.5 818.5,151.5 819.5,150.5 820.5,148.5 821.5,147.5 822.5,145.5 823.5,144.5 824.5,142.5 825.5,141.5 826.5,140.5 827.5,138.5 828.5,137.5 829.5,136.5 830.5,135.5 831.5,134.5 832.5,133.5 833.5,133.5 834.5,132.5 835.5,131.5 836.5,131.5 837.5,130.5 838.5,130.5 839.5,129.5 840.5,129.5 841.5,129.5 842.5,129.5 843.5,129.5 844.5,129.5 845.5,129.5 846.5,129.5 847.5,130.5 848.5,130.5 849.5,130.5 850.5,131.5 851.5,132.5 852.5,132.5 853.5,133.5 854.5,134.5 855.5,135.5 856.5,136.5 857.5,137.5 858.5,138.5 859.5,139.5 860.5,140.5 861.5,142.5 862.5,143.5 863.5,144.5 864.5,146.5 865.5,147.5 866.5,149.5 867.5,151.5 868.5,152.5 869.5,154.5 870.5,156.5 871.5,158.5 872.5,159.5 873.5,161.5 874.5,163.5 875.5,165.5 876.5,167.5 877.5,169.5 878.5,171.5 879.5,173.5 880.5,175.5 881.5,177.5 882.5,179.5 883.5,181.5 884.5,183.5 885.5,185.5 886.5,187.5 887.5,189.5 888.5,191.5 889.5,193.5 890.5,195.5 891.5,197.5 892.5,198.5" fill="none" stroke="#00ffff" stroke-width="1" shape-rendering="crispEdges"/>
<polyline points="199.5,142.5 200.5,140.5 201.5,139.5 202.5,138.5 203.5,137.5 204.5,136.5 205.5,135.5 206.5,134.5 207.5,133.5 208.5,132.5 209.5,132.5 210.5,131.5 211.5,130.5 212.5,130.5 213.5,130.5 214.5,129.5 215.5,129.5 216.5,129.5 217.5,129.5 218.5,129.5 219.5,129.5 220.5,129.5 221.5,129.5 222.5,130.5 223.5,130.5 224.5,131.5 225.5,131.5 226.5,132.5 227.5,133.5 228.5,133.5 229.5,134.5 230.5,135.5 231.5,136.5 232.5,137.5 233.5,138.5 234.5,140.5 235.5,141.5 236.5,142.5 237.5,144.5 238.5,145.5 239.5,147.5 240.5,148.5 241.5,150.5 242.5,151.5 243.5,153.5 244.5,155.5 245.5,157.5 246.5,158.5 247.5,160.5 248.5,162.5 249.5,164.5 250.5,166.5 251.5,168.5 252.5,170.5 253.5,172.5 254.5,174.5 255.5,176.5 256.5,178.5 257.5,180.5 258.5,182.5 259.5,184.5 260.5,186.5 261.5,188.5 262.5,190.5 263.5,192.5 264.5,194.5 265.5,195.5 266.5,197.5 267.5,199.5 268.5,201.5 269.5,203.5 270.5,204.5 271.5,206.5 272.5,208.5 273.5,209.5 274.5,211.5 275.5,213.5 276.5,214.5 277.5,215.5 278.5,217.5 279.5,218.5 280.5,219.5 281.5,220.5 282.5,221.5 283.5,222.5 284.5,223.5 285.5,224.5 286.5,225.5 287.5,226.5 288.5,226.5 289.5,227.5 290.5,227.5 291.5,228.5 292.5,228.5 293.5,228.5 294.5,229.5 295.5,229.5 296.5,229.5 297.5,229.5 298.5,229.5 299.5,228.5 300.5,228.5 301.5,228.5 302.5,227.5 303.5,227.5 304.5,226.5 305.5,225.5 306.5,225.5 307.5,224.5 308.5,223.5 309.5,222.5 310.5,221.5 311.5,220.5 312.5,219.5 313.5,217.5 314.5,216.5 315.5,215.5 316.5,213.5 317.5,212.5 318.5,210.5 319.5,209.5 320.5,207.5 321.5,205.5 322.5,204.5 323.5,202.5 324.5,200.5 325.5,198.5 326.5,196.5 327.5,194.5 328.5,193.5 329.5,191.5 330.5,189.5 331.5,187.5 332.5,185.5 333.5,183.5 334.5,181.5 335.5,179.5 336.5,177.5 337.5,175.5 338.5,173.5 339.5,171.5 340.5,169.5 341.5,167.5 342.5,165.5 343.5,163.5 344.5,161.5 345.5,159.5 346.5,157.5 347.5,156.5 348.5,154.5 349.5,152.5 350.5,150.5 351.5,149.5 352.5,147.5 353.5,146.5 354.5,144.5 355.5,143.5 356.5,142.5 357.5,140.5 358.5,139.5 359.5,138.5 360.5,137.5 361.5,136.5 362.5,135.5 363.5,134.5 364.5,133.5 365.5,132.5 366.5,131.5 367.5,131.5 368.5,130.5 369.5,130.5 370.5,130.5 371.5,129.5 372.5,129.5 373.5,129.5 374.5,129.5 375.5,129.5 376.5,129.5 377.5,129.5 378.5,129.5 379.5,130.5 380.5,130.5 381.5,131.5 382.5,131.5 383.5,132.5 384.5,133.5 385.5,133.5 386.5,134.5 387.5,135.5 388.5,136.5 389.5,137.5 390.5,138.5 391.5,140.5 392.5,141.5 393.5,142.5 394.5,144.5 395.5,145.5 396.5,147.5 397.5,147.5 398.5,147.5 399.5,147.5 400.5,147.5 401.5,147.5 402.5,157.5 403.5,159.5 404.5,160.5 405.5,162.5 406.5,164.5 407.5,166.5 408.5,168.5 409.5,170.5 410.5,172.5 411.5,174.5 412.5,176.5 413.5,178.5 414.5,180.5 415.5,182.5 416.5,184.5 417.5,186.5 418.5,188.5 419.5,190.5 420.5,192.5 421.5,194.5 422.5,196.5 423.5,198.5 424.5,199.5 425.5,201.5 426.5,203.5 427.5,205.5 428.5,206.5 429.5,208.5 430.5,210.5 431.5,211.5 432.5,213.5 433.5,214.5 434.5,215.5 435.5,217.5 436.5,218.5 437.5,219.5 438.5,220.5 439.5,222.5 440.5,223.5 441.5,223.5 442.5,224.5 443.5,225.5 444.5,226.5 445.5,226.5 446.5,227.5 447.5,228.5 448.5,228.5 449.5,228.5 450.5,229.5 451.5,229.5 452.5,229.5 453.5,229.5 454.5,229.5 455.5,229.5 456.5,228.5 457.5,228.5 458.5,228.5 459.5,227.5 460.5,227.5 461.5,226.5 462.5,225.5 463.5,225.5 464.5,224.5 465.5,223.5 466.5,222.5 467.5,221.5 468.5,220.5 469.5,218.5 470.5,217.5 471.5,216.5 472.5,215.5 473.5,213.5 474.5,212.5 475.5,210.5 476.5,208.5 477.5,207.5 478.5,205.5 479.5,203.5 480.5,202.5 481.5,200.5 482.5,198.5 483.5,196.5 484.5,194.5 485.5,192.5 486.5,190.5 487.5,188.5 488.5,187.5 489.5,185.5 490.5,183.5 491.5,181.5 492.5,179.5 493.5,177.5 494.5,175.5 495.5,173.5 496.5,171.5 497.5,169.5 498.5,167.5 499.5,165.5 500.5,163.5 501.5,161.5 502.5,159.5 503.5,157.5 504.5,155.5 505.5,154.5 506.5,152.5 507.5,150.5 508.5,149.5 509.5,147.5 510.5,146.5 511.5,144.5 512.5,143.5 513.5,141.5 514.5,140.5 515.5,139.5 516.5,138.5 517.5,137.5 518.5,136.5 519.5,135.5 520.5,134.5 521.5,133.5 522.5,132.5 523.5,131.5 524.5,131.5 525.5,130.5 526.5,130.5 527.5,129.5 528.5,129.5 529.5,129.5 530.5,129.5 531.5,129.5 532.5,129.5 533.5,129.5 534.5,129.5 535.5,129.5 536.5,130.5 537.5,130.5 538.5,131.5 539.5,131.5 540.5,132.5 541.5,133.5 542.5,133.5 543.5,134.5 544.5,135.5 545.5,136.5 546.5,137.5 547.5,139.5 548.5,140.5 549.5,141.5 550.5,142.5 551.5,144.5 552.5,145.5 553.5,147.5 554.5,148.5 555.5,150.5 556.5,152.5 557.5,153.5 558.5,155.5 559.5,157.5 560.5,159.5 561.5,161.5 562.5,162.5 563.5,164.5 564.5,166.5 565.5,168.5 566.5,170.5 567.5,172.5 568.5,174.5 569.5,176.5 570.5,178.5 571.5,180.5 572.5,182.5 573.5,184.5 574.5,186.5 575.5,188.5 576.5,190.5 577.5,192.5 578.5,194.5 579.5,196.5 580.5,198.5 581.5,200.5 582.5,201.5 583.5,203.5 584.5,205.5 585.5,207.5 586.5,208.5 587.5,210.5 588.5,211.5 589.5,213.5 590.5,214.5 591.5,216.5 592.5,217.5 593.5,218.5 594.5,219.5 595.5,221.5 596.5,222.5 597.5,223.5 598.5,224.5 599.5,224.5 600.5,225.5 601.5,226.5 602.5,227.5 603.5,227.5 604.5,228.5 605.5,228.5 606.5,228.5 607.5,229.5 608.5,229.5 609.5,229.5 610.5,229.5 611.5,229.5 612.5,229.5 613.5,228.5 614.5,228.5 615.5,228.5 616.5,227.5 617.5,227.5 618.5,226.5 619.5,225.5 620.5,224.5 621.5,224.5 622.5,223.5 623.5,222.5 624.5,221.5 625.5,220.5 626.5,218.5 627.5,217.5 628.5,216.5 629.5,214.5 630.5,213.5 631.5,211.5 632.5,210.5 633.5,208.5 634.5,207.5 635.5,205.5 636.5,203.5 637.5,202.5 638.5,200.5 639.5,198.5 640.5,196.5 641.5,194.5 642.5,192.5 643.5,190.5 644.5,188.5 645.5,186.5 646.5,184.5 647.5,182.5 648.5,180.5 649.5,178.5 650.5,176.5 651.5,174.5 652.5,172.5 653.5,170.5 654.5,168.5 655.5,166.5 656.5,165.5 657.5,163.5 658.5,161.5 659.5,159.5 660.5,157.5 661.5,155.5 662.5,154.5 663.5,152.5 664.5,150.5 665.5,149.5 666.5,147.5 667.5,145.5 668.5,144.5 669.5,143.5 670.5,141.5 671.5,141.5 672.5,141.5 673.5,141.5 674.5,141.5 675.5,141.5 676.5,134.5 677.5,134.5 678.5,133.5 679.5,132.5 680.5,131.5 681.5,131.5 682.5,130.5 683.5,130.5 684.5,129.5 685.5,129.5 686.5,129.5 687.5,129.5 688.5,129.5 689.5,129.5 690.5,129.5 691.5,129.5 692.5,129.5 693.5,130.5 694.5,130.5 695.5,131.5 696.5,131.5 697.5,132.5 698.5,133.5 699.5,134.5 700.5,134.5 701.5,135.5 702.5,136.5 703.5,138.5 704.5,139.5 705.5,140.5 706.5,141.5 707.5,143.5 708.5,144.5 709.5,145.5 710.5,147.5 711.5,149.5 712.5,150.5 713.5,152.5 714.5,154.5 715.5,155.5 716.5,157.5 717.5,159.5 718.5,161.5 719.5,163.5 720.5,165.5 721.5,166.5 722.5,168.5 723.5,170.5 724.5,172.5 725.5,174.5 726.5,176.5 727.5,178.5 728.5,180.5 729.5,182.5 730.5,184.5 731.5,186.5 732.5,188.5 733.5,190.5 734.5,192.5 735.5,194.5 736.5,196.5 737.5,198.5 738.5,200.5 739.5,202.5 740.5,203.5 741.5,205.5 742.5,207.5 743.5,208.5 744.5,210.5 745.5,211.5 746.5,213.5 747.5,214.5 748.5,216.5 749.5,217.5 750.5,218.5 751.5,220.5 752.5,221.5 753.5,222.5 754.5,223.5 755.5,224.5 756.5,224.5 757.5,225.5 758.5,226.5 759.5,227.5 760.5,227.5 761.5,228.5 762.5,228.5 763.5,228.5 764.5,229.5 765.5,229.5 766.5,229.5 767.5,229.5 768.5,229.5 769.5,229.5 770.5,228.5 771.5,228.5 772.5,228.5 773.5,227.5 774.5,227.5 775.5,226.5 776.5,225.5 777.5,224.5 778.5,224.5 779.5,223.5 780.5,222.5 781.5,221.5 782.5,219.5 783.5,218.5 784.5,217.5 785.5,216.5 786.5,214.5 787.5,213.5 788.5,211.5 789.5,210.5 790.5,208.5 791.5,207.5 792.5,205.5 793.5,203.5 794.5,201.5 795.5,200.5 796.5,198.5 797.5,196.5 798.5,194.5 799.5,192.5 800.5,190.5 801.5,188.5 802.5,186.5 803.5,184.5 804.5,182.5 805.5,180.5 806.5,178.5 807.5,176.5 808.5,174.5 809.5,172.5 810.5,170.5 811.5,168.5 812.5,166.5 813.5,164.5 814.5,162.5 815.5,161.5 816.5,159.5 817.5,157.5 818.5,155.5 819.5,153.5 820.5,152.5 821.5,150.5 822.5,148.5 823.5,147.5 824.5,145.5 825.5,144.5 826.5,142.5 827.5,141.5 828.5,140.5 829.5,139.5 830.5,137.5 831.5,136.5 832.5,135.5 833.5,134.5 834.5,133.5 835.5,133.5 836.5,132.5 837.5,131.5 838.5,131.5 839.5,130.5 840.5,130.5 841.5,129.5 842.5,129.5 843.5,129.5 844.5,129.5 845.5,129.5 846.5,129.5 847.5,129.5 848.5,129.5 849.5,129.5 850.5,130.5 851.5,130.5 852.5,131.5 853.5,131.5 854.5,132.5 855.5,133.5 856.5,134.5 857.5,135.5 858.5,136.5 859.5,137.5 860.5,138.5 861.5,139.5 862.5,140.5 863.5,141.5 864.5,143.5 865.5,144.5 866.5,146.5 867.5,147.5 868.5,149.5 869.5,150.5 870.5,152.5 871.5,154.5 872.5,155.5 873.5,157.5 874.5,159.5 875.5,161.5 876.5,163.5 877.5,165.5 878.5,167.5 879.5,169.5 880.5,171.5 881.5,173.5 882.5,175.5 883.5,177.5 884.5,179.5 885.5,181.5 886.5,183.5 887.5,185.5 888.5,187.5 889.5,188.5 890.5,190.5 891.5,192.5 892.5,194.5" fill="none" stroke="#0000ff" stroke-width="1" shape-rendering="crispEdges"/>
<rect x="199" y="68" width="1" height="1" fill="#f00"/>
<rect x="199" y="291" width="1" height="1" fill="#f00"/>
<rect x="945" y="51" width="1" height="258" fill="#000"/>
<circle cx="945.5" cy="197.5" r="5.6" fill="#0000ff"/>
<g shape-rendering="crispEdges"><rect x="965" y="108" width="20" height="15" fill="#646464"/><rect x="966" y="109" width="18" height="13" fill="#727272"/><rect x="966" y="109" width="17" height="12" fill="#a8a8a8"/><rect x="966" y="109" width="16" height="11" fill="#ffffff"/><rect x="967" y="110" width="15" height="10" fill="#f7f7f7"/><rect x="967" y="110" width="14" height="9" fill="#f0f0f0"/><rect x="973" y="115" width="4" height="1" fill="#000"/></g>
<g shape-rendering="crispEdges"><rect x="965" y="172" width="20" height="15" fill="#646464"/><rect x="966" y="173" width="18" height="13" fill="#727272"/><rect x="966" y="173" width="17" height="12" fill="#a8a8a8"/><rect x="966" y="173" width="16" height="11" fill="#ffffff"/><rect x="967" y="174" width="15" height="10" fill="#f7f7f7"/><rect x="967" y="174" width="14" height="9" fill="#f0f0f0"/><rect x="973" y="179" width="4" height="1" fill="#000"/></g>
<g shape-rendering="crispEdges"><rect x="965" y="236" width="20" height="15" fill="#646464"/><rect x="966" y="237" width="18" height="13" fill="#727272"/><rect x="966" y="237" width="17" height="12" fill="#a8a8a8"/><rect x="966" y="237" width="16" height="11" fill="#ffffff"/><rect x="967" y="238" width="15" height="10" fill="#f7f7f7"/><rect x="967" y="238" width="14" height="9" fill="#f0f0f0"/><rect x="973" y="243" width="4" height="1" fill="#000"/></g>
<rect x="994" y="28" width="8" height="1" fill="#555"/>
<rect x="994" y="176" width="8" height="19" fill="#2a2a2a"/>
<text x="993" y="161" style="font-family:Liberation Sans,sans-serif;font-size:12px;fill:#d8d8d8">co</text>
<text x="994.5" y="190" style="font-family:Liberation Sans,sans-serif;font-size:12px;fill:#c8c8c8">lic</text>
<text x="994.5" y="217" style="font-family:Liberation Sans,sans-serif;font-size:12px;fill:#d8d8d8">la</text>
<rect x="994" y="41" width="2" height="5" fill="#c07020"/>
</svg></body></html>
